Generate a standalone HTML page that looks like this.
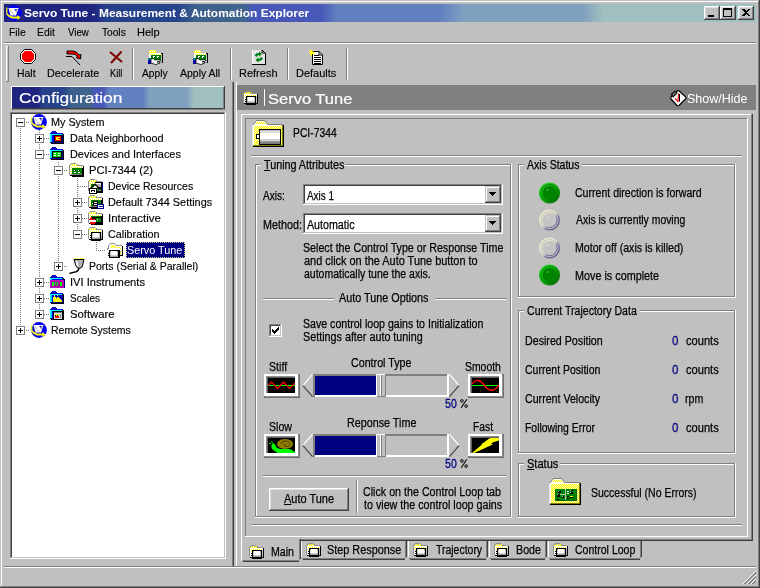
<!DOCTYPE html>
<html><head><meta charset="utf-8"><title>Servo Tune - Measurement &amp; Automation Explorer</title><style>
html,body{margin:0;padding:0}
body{width:760px;height:588px;overflow:hidden;background:#c0c0c0;position:relative;font-family:"Liberation Sans",sans-serif}
body>div,body>svg,body>span{position:absolute}
svg{display:block;overflow:visible}
.t{white-space:nowrap;transform-origin:0 0;display:block;filter:grayscale(1)}
.n{filter:none;will-change:transform}
</style></head>
<body>
<div style="left:1px;top:1px;width:757px;height:1px;background:#fff;"></div>
<div style="left:1px;top:1px;width:1px;height:585px;background:#fff;"></div>
<div style="left:758px;top:1px;width:1px;height:586px;background:#808080;"></div>
<div style="left:1px;top:586px;width:758px;height:1px;background:#808080;"></div>
<div style="left:759px;top:0px;width:1px;height:588px;background:#404040;"></div>
<div style="left:0px;top:587px;width:760px;height:1px;background:#404040;"></div>
<div style="left:4px;top:4px;width:752px;height:18px;background:linear-gradient(90deg,#1f2480 0,#1f2480 88px,#24408a 102px,#26448c 174px,#3e608c 192px,#40648c 240px,#4858b8 250px,#4858b8 318px,#6080c0 332px,#6080c0 436px,#80a0c0 460px,#80a0c0 578px,#a0c0c0 600px,#a0c0c0 752px);"></div>
<span class="t" id="title" style="left:24.00px;top:8.00px;font-size:11px;line-height:11px;color:#fff;font-weight:bold;transform:scaleX(1.0878);">Servo Tune - Measurement &amp; Automation Explorer</span>
<div style="left:704px;top:6px;width:16px;height:14px;background:#c0c0c0;"></div>
<div style="left:704px;top:6px;width:16px;height:1px;background:#fff;"></div>
<div style="left:704px;top:6px;width:1px;height:14px;background:#fff;"></div>
<div style="left:704px;top:19px;width:16px;height:1px;background:#404040;"></div>
<div style="left:719px;top:6px;width:1px;height:14px;background:#404040;"></div>
<div style="left:705px;top:7px;width:14px;height:1px;background:#dfdfdf;"></div>
<div style="left:705px;top:7px;width:1px;height:12px;background:#dfdfdf;"></div>
<div style="left:705px;top:18px;width:14px;height:1px;background:#808080;"></div>
<div style="left:718px;top:7px;width:1px;height:12px;background:#808080;"></div>
<div style="left:720px;top:6px;width:16px;height:14px;background:#c0c0c0;"></div>
<div style="left:720px;top:6px;width:16px;height:1px;background:#fff;"></div>
<div style="left:720px;top:6px;width:1px;height:14px;background:#fff;"></div>
<div style="left:720px;top:19px;width:16px;height:1px;background:#404040;"></div>
<div style="left:735px;top:6px;width:1px;height:14px;background:#404040;"></div>
<div style="left:721px;top:7px;width:14px;height:1px;background:#dfdfdf;"></div>
<div style="left:721px;top:7px;width:1px;height:12px;background:#dfdfdf;"></div>
<div style="left:721px;top:18px;width:14px;height:1px;background:#808080;"></div>
<div style="left:734px;top:7px;width:1px;height:12px;background:#808080;"></div>
<div style="left:738px;top:6px;width:16px;height:14px;background:#c0c0c0;"></div>
<div style="left:738px;top:6px;width:16px;height:1px;background:#fff;"></div>
<div style="left:738px;top:6px;width:1px;height:14px;background:#fff;"></div>
<div style="left:738px;top:19px;width:16px;height:1px;background:#404040;"></div>
<div style="left:753px;top:6px;width:1px;height:14px;background:#404040;"></div>
<div style="left:739px;top:7px;width:14px;height:1px;background:#dfdfdf;"></div>
<div style="left:739px;top:7px;width:1px;height:12px;background:#dfdfdf;"></div>
<div style="left:739px;top:18px;width:14px;height:1px;background:#808080;"></div>
<div style="left:752px;top:7px;width:1px;height:12px;background:#808080;"></div>
<div style="left:708px;top:15px;width:6px;height:2px;background:#000;"></div>
<div style="left:723px;top:8px;width:9px;height:9px;border:1px solid #000;border-top-width:2px;box-sizing:border-box;"></div>
<svg style="left:742px;top:9px" width="8" height="7" viewBox="0 0 8 7" shape-rendering="crispEdges"><path d="M0,0 L2,0 L4,2 L6,0 L8,0 L8,1 L5,3.5 L8,6 L8,7 L6,7 L4,5 L2,7 L0,7 L0,6 L3,3.5 L0,1Z" fill="#000" /></svg>
<span class="t" id="t1" style="left:9.06px;top:27.00px;font-size:11px;line-height:11px;color:#000;-webkit-text-stroke:0.15px #000;transform:scaleX(0.9375);">File</span>
<span class="t" id="t2" style="left:37.06px;top:27.00px;font-size:11px;line-height:11px;color:#000;-webkit-text-stroke:0.15px #000;transform:scaleX(0.9444);">Edit</span>
<span class="t" id="t3" style="left:68.00px;top:27.00px;font-size:11px;line-height:11px;color:#000;-webkit-text-stroke:0.15px #000;transform:scaleX(0.8750);">View</span>
<span class="t" id="t4" style="left:102.00px;top:27.00px;font-size:11px;line-height:11px;color:#000;-webkit-text-stroke:0.15px #000;transform:scaleX(0.9231);">Tools</span>
<span class="t" id="t5" style="left:137.00px;top:27.00px;font-size:11px;line-height:11px;color:#000;-webkit-text-stroke:0.15px #000;">Help</span>
<div style="left:4px;top:42px;width:752px;height:1px;background:#808080;"></div>
<div style="left:4px;top:43px;width:752px;height:1px;background:#fff;"></div>
<div style="left:6px;top:46px;width:1px;height:36px;background:#fff;"></div>
<div style="left:8px;top:46px;width:1px;height:36px;background:#808080;"></div>
<div style="left:6px;top:46px;width:2px;height:1px;background:#fff;"></div>
<div style="left:6px;top:81px;width:3px;height:1px;background:#808080;"></div>
<div style="left:132px;top:48px;width:1px;height:32px;background:#808080;"></div>
<div style="left:133px;top:48px;width:1px;height:32px;background:#fff;"></div>
<div style="left:230px;top:48px;width:1px;height:32px;background:#808080;"></div>
<div style="left:231px;top:48px;width:1px;height:32px;background:#fff;"></div>
<div style="left:287px;top:48px;width:1px;height:32px;background:#808080;"></div>
<div style="left:288px;top:48px;width:1px;height:32px;background:#fff;"></div>
<div style="left:346px;top:48px;width:1px;height:32px;background:#808080;"></div>
<div style="left:347px;top:48px;width:1px;height:32px;background:#fff;"></div>
<span class="t" id="t6" style="left:17.05px;top:68.00px;font-size:11px;line-height:11px;color:#000;-webkit-text-stroke:0.15px #000;transform:scaleX(0.9474);">Halt</span>
<span class="t" id="t7" style="left:47.02px;top:68.00px;font-size:11px;line-height:11px;color:#000;-webkit-text-stroke:0.15px #000;transform:scaleX(0.9808);">Decelerate</span>
<span class="t" id="t8" style="left:110.15px;top:68.00px;font-size:11px;line-height:11px;color:#000;-webkit-text-stroke:0.15px #000;transform:scaleX(0.8462);">Kill</span>
<span class="t" id="t9" style="left:142.00px;top:68.00px;font-size:11px;line-height:11px;color:#000;-webkit-text-stroke:0.15px #000;transform:scaleX(0.9286);">Apply</span>
<span class="t" id="t10" style="left:180.00px;top:68.00px;font-size:11px;line-height:11px;color:#000;-webkit-text-stroke:0.15px #000;transform:scaleX(0.9524);">Apply All</span>
<span class="t" id="t11" style="left:239.00px;top:68.00px;font-size:11px;line-height:11px;color:#000;-webkit-text-stroke:0.15px #000;">Refresh</span>
<span class="t" id="t12" style="left:296.00px;top:68.00px;font-size:11px;line-height:11px;color:#000;-webkit-text-stroke:0.15px #000;">Defaults</span>
<div style="left:11px;top:86px;width:214px;height:1px;background:#fff;"></div>
<div style="left:11px;top:86px;width:1px;height:24px;background:#fff;"></div>
<div style="left:11px;top:109px;width:214px;height:1px;background:#404040;"></div>
<div style="left:224px;top:86px;width:1px;height:24px;background:#404040;"></div>
<div style="left:12px;top:108px;width:213px;height:1px;background:#404040;"></div>
<div style="left:223px;top:87px;width:1px;height:22px;background:#808080;"></div>
<div style="left:11px;top:109px;width:214px;height:1px;background:#808080;"></div>
<div style="left:12px;top:87px;width:211px;height:21px;background:linear-gradient(90deg,#1f2480 0,#1f2480 26px,#24408a 30px,#26448c 52px,#3e608c 59px,#40648c 79px,#4858b8 82px,#4858b8 91px,#6080c0 97px,#6080c0 131px,#80a0c0 137px,#80a0c0 175px,#a0c0c0 182px,#a0c0c0 211px);"></div>
<span class="t" id="cfg" style="left:18.88px;top:90.00px;font-size:15.5px;line-height:15.5px;color:#fff;-webkit-text-stroke:0.2px #fff;transform:scaleX(1.1222);">Configuration</span>
<div style="left:10px;top:112px;width:216px;height:447px;background:#fff;"></div>
<div style="left:10px;top:112px;width:215px;height:1px;background:#808080;"></div>
<div style="left:10px;top:112px;width:1px;height:446px;background:#808080;"></div>
<div style="left:11px;top:113px;width:213px;height:1px;background:#404040;"></div>
<div style="left:11px;top:113px;width:1px;height:444px;background:#404040;"></div>
<div style="left:10px;top:558px;width:216px;height:1px;background:#fff;"></div>
<div style="left:225px;top:112px;width:1px;height:447px;background:#fff;"></div>
<div style="left:11px;top:557px;width:214px;height:1px;background:#c0c0c0;"></div>
<div style="left:224px;top:113px;width:1px;height:445px;background:#c0c0c0;"></div>
<div style="left:232px;top:82px;width:1px;height:484px;background:#808080;"></div>
<div style="left:233px;top:82px;width:1px;height:484px;background:#404040;"></div>
<div style="left:236px;top:82px;width:1px;height:484px;background:#fff;"></div>
<div style="left:237px;top:85px;width:519px;height:25px;background:#808080;"></div>
<div style="left:264px;top:89px;width:1px;height:17px;background:#fff;"></div>
<span class="t" id="hdr" style="left:267.94px;top:91.00px;font-size:15.5px;line-height:15.5px;color:#fff;-webkit-text-stroke:0.2px #fff;transform:scaleX(1.0641);">Servo Tune</span>
<span class="t" id="showhide" style="left:687.00px;top:93.00px;font-size:12.5px;line-height:12.5px;color:#fff;">Show/Hide</span>
<div style="left:241px;top:114px;width:510px;height:1px;background:#fff;"></div>
<div style="left:241px;top:114px;width:1px;height:447px;background:#fff;"></div>
<div style="left:751px;top:114px;width:1px;height:426px;background:#808080;"></div>
<div style="left:300px;top:539px;width:452px;height:1px;background:#808080;"></div>
<div style="left:752px;top:114px;width:1px;height:427px;background:#404040;"></div>
<div style="left:300px;top:540px;width:453px;height:1px;background:#404040;"></div>
<div style="left:245px;top:118px;width:502px;height:1px;background:#808080;"></div>
<div style="left:245px;top:118px;width:1px;height:418px;background:#808080;"></div>
<div style="left:245px;top:536px;width:503px;height:1px;background:#fff;"></div>
<div style="left:747px;top:118px;width:1px;height:419px;background:#fff;"></div>
<span class="t" id="t16" style="left:293.17px;top:127.00px;font-size:12.5px;line-height:12.5px;color:#000;-webkit-text-stroke:0.25px #000;transform:scaleX(0.8269);">PCI-7344</span>
<div style="left:251px;top:155px;width:491px;height:1px;background:#808080;"></div>
<div style="left:251px;top:156px;width:491px;height:1px;background:#fff;"></div>
<div style="left:251px;top:524px;width:491px;height:1px;background:#808080;"></div>
<div style="left:251px;top:525px;width:491px;height:1px;background:#fff;"></div>
<div style="left:255px;top:164px;width:6px;height:1px;background:#808080;"></div>
<div style="left:256px;top:165px;width:5px;height:1px;background:#fff;"></div>
<div style="left:345px;top:164px;width:166px;height:1px;background:#808080;"></div>
<div style="left:345px;top:165px;width:165px;height:1px;background:#fff;"></div>
<div style="left:255px;top:164px;width:1px;height:353px;background:#808080;"></div>
<div style="left:256px;top:165px;width:1px;height:351px;background:#fff;"></div>
<div style="left:255px;top:516px;width:256px;height:1px;background:#808080;"></div>
<div style="left:255px;top:517px;width:257px;height:1px;background:#fff;"></div>
<div style="left:510px;top:164px;width:1px;height:353px;background:#808080;"></div>
<div style="left:511px;top:164px;width:1px;height:354px;background:#fff;"></div>
<span class="t" id="t17" style="left:264.00px;top:159.00px;font-size:12.5px;line-height:12.5px;color:#000;-webkit-text-stroke:0.25px #000;transform:scaleX(0.8602);"><u>T</u>uning Attributes</span>
<span class="t" id="t18" style="left:263.00px;top:190.00px;font-size:12.5px;line-height:12.5px;color:#000;-webkit-text-stroke:0.25px #000;transform:scaleX(0.8077);">Axis:</span>
<span class="t" id="t19" style="left:263.14px;top:219.00px;font-size:12.5px;line-height:12.5px;color:#000;-webkit-text-stroke:0.25px #000;transform:scaleX(0.8605);">Method:</span>
<div style="left:303px;top:184px;width:200px;height:21px;background:#fff;"></div>
<div style="left:303px;top:184px;width:199px;height:1px;background:#808080;"></div>
<div style="left:303px;top:184px;width:1px;height:20px;background:#808080;"></div>
<div style="left:304px;top:185px;width:197px;height:1px;background:#404040;"></div>
<div style="left:304px;top:185px;width:1px;height:18px;background:#404040;"></div>
<div style="left:303px;top:204px;width:200px;height:1px;background:#fff;"></div>
<div style="left:502px;top:184px;width:1px;height:21px;background:#fff;"></div>
<div style="left:304px;top:203px;width:198px;height:1px;background:#c0c0c0;"></div>
<div style="left:501px;top:185px;width:1px;height:19px;background:#c0c0c0;"></div>
<div style="left:485px;top:186px;width:16px;height:17px;background:#c0c0c0;"></div>
<div style="left:485px;top:186px;width:16px;height:1px;background:#c0c0c0;"></div>
<div style="left:485px;top:186px;width:1px;height:17px;background:#c0c0c0;"></div>
<div style="left:485px;top:202px;width:16px;height:1px;background:#404040;"></div>
<div style="left:500px;top:186px;width:1px;height:17px;background:#404040;"></div>
<div style="left:486px;top:187px;width:14px;height:1px;background:#fff;"></div>
<div style="left:486px;top:187px;width:1px;height:15px;background:#fff;"></div>
<div style="left:486px;top:201px;width:14px;height:1px;background:#808080;"></div>
<div style="left:499px;top:187px;width:1px;height:15px;background:#808080;"></div>
<svg style="left:489px;top:192px" width="7" height="4" viewBox="0 0 7 4" shape-rendering="crispEdges"><path d="M0,0 H7 V1 H6 V2 H5 V3 H4 V4 H3 V3 H2 V2 H1 V1 H0Z" fill="#000" /></svg>
<span class="t" id="t20" style="left:307.00px;top:190.00px;font-size:12.5px;line-height:12.5px;color:#000;-webkit-text-stroke:0.25px #000;transform:scaleX(0.7941);">Axis 1</span>
<div style="left:303px;top:213px;width:200px;height:21px;background:#fff;"></div>
<div style="left:303px;top:213px;width:199px;height:1px;background:#808080;"></div>
<div style="left:303px;top:213px;width:1px;height:20px;background:#808080;"></div>
<div style="left:304px;top:214px;width:197px;height:1px;background:#404040;"></div>
<div style="left:304px;top:214px;width:1px;height:18px;background:#404040;"></div>
<div style="left:303px;top:233px;width:200px;height:1px;background:#fff;"></div>
<div style="left:502px;top:213px;width:1px;height:21px;background:#fff;"></div>
<div style="left:304px;top:232px;width:198px;height:1px;background:#c0c0c0;"></div>
<div style="left:501px;top:214px;width:1px;height:19px;background:#c0c0c0;"></div>
<div style="left:485px;top:215px;width:16px;height:17px;background:#c0c0c0;"></div>
<div style="left:485px;top:215px;width:16px;height:1px;background:#c0c0c0;"></div>
<div style="left:485px;top:215px;width:1px;height:17px;background:#c0c0c0;"></div>
<div style="left:485px;top:231px;width:16px;height:1px;background:#404040;"></div>
<div style="left:500px;top:215px;width:1px;height:17px;background:#404040;"></div>
<div style="left:486px;top:216px;width:14px;height:1px;background:#fff;"></div>
<div style="left:486px;top:216px;width:1px;height:15px;background:#fff;"></div>
<div style="left:486px;top:230px;width:14px;height:1px;background:#808080;"></div>
<div style="left:499px;top:216px;width:1px;height:15px;background:#808080;"></div>
<svg style="left:489px;top:221px" width="7" height="4" viewBox="0 0 7 4" shape-rendering="crispEdges"><path d="M0,0 H7 V1 H6 V2 H5 V3 H4 V4 H3 V3 H2 V2 H1 V1 H0Z" fill="#000" /></svg>
<span class="t" id="t21" style="left:307.00px;top:219.00px;font-size:12.5px;line-height:12.5px;color:#000;-webkit-text-stroke:0.25px #000;transform:scaleX(0.8545);">Automatic</span>
<span class="t" id="t22" style="left:303.15px;top:242.00px;font-size:12.5px;line-height:12.5px;color:#000;-webkit-text-stroke:0.25px #000;transform:scaleX(0.8541);">Select the Control Type or Response Time</span>
<span class="t" id="t23" style="left:304.00px;top:255.00px;font-size:12.5px;line-height:12.5px;color:#000;-webkit-text-stroke:0.25px #000;transform:scaleX(0.8737);">and click on the Auto Tune button to</span>
<span class="t" id="t24" style="left:304.00px;top:268.00px;font-size:12.5px;line-height:12.5px;color:#000;-webkit-text-stroke:0.25px #000;transform:scaleX(0.8400);">automatically tune the axis.</span>
<div style="left:263px;top:298px;width:71px;height:1px;background:#808080;"></div>
<div style="left:263px;top:299px;width:71px;height:1px;background:#fff;"></div>
<div style="left:435px;top:298px;width:71px;height:1px;background:#808080;"></div>
<div style="left:435px;top:299px;width:71px;height:1px;background:#fff;"></div>
<span class="t" id="t25" style="left:339.00px;top:292.00px;font-size:12.5px;line-height:12.5px;color:#000;-webkit-text-stroke:0.25px #000;transform:scaleX(0.8641);">Auto Tune Options</span>
<div style="left:269px;top:324px;width:13px;height:13px;background:#fff;"></div>
<div style="left:269px;top:324px;width:12px;height:1px;background:#808080;"></div>
<div style="left:269px;top:324px;width:1px;height:12px;background:#808080;"></div>
<div style="left:270px;top:325px;width:10px;height:1px;background:#404040;"></div>
<div style="left:270px;top:325px;width:1px;height:10px;background:#404040;"></div>
<div style="left:269px;top:336px;width:13px;height:1px;background:#fff;"></div>
<div style="left:281px;top:324px;width:1px;height:13px;background:#fff;"></div>
<div style="left:270px;top:335px;width:11px;height:1px;background:#c0c0c0;"></div>
<div style="left:280px;top:325px;width:1px;height:11px;background:#c0c0c0;"></div>
<svg style="left:272px;top:327px" width="7" height="7" viewBox="0 0 7 7" shape-rendering="crispEdges"><path d="M0,2 V5 L2,7 L7,2 V-1 L2,4 Z" fill="#000" /></svg>
<span class="t" id="t26" style="left:303.15px;top:318.00px;font-size:12.5px;line-height:12.5px;color:#000;-webkit-text-stroke:0.25px #000;transform:scaleX(0.8483);">Save control loop gains to Initialization</span>
<span class="t" id="t27" style="left:303.14px;top:331.00px;font-size:12.5px;line-height:12.5px;color:#000;-webkit-text-stroke:0.25px #000;transform:scaleX(0.8613);">Settings after auto tuning</span>
<span class="t" id="t28" style="left:269.15px;top:361.00px;font-size:12.5px;line-height:12.5px;color:#000;-webkit-text-stroke:0.25px #000;transform:scaleX(0.8500);">Stiff</span>
<span class="t" id="t29" style="left:351.14px;top:357.00px;font-size:12.5px;line-height:12.5px;color:#000;-webkit-text-stroke:0.25px #000;transform:scaleX(0.8551);">Control Type</span>
<span class="t" id="t30" style="left:465.17px;top:361.00px;font-size:12.5px;line-height:12.5px;color:#000;-webkit-text-stroke:0.25px #000;transform:scaleX(0.8333);">Smooth</span>
<div style="left:264px;top:374px;width:36px;height:24px;background:#c0c0c0;"></div>
<div style="left:264px;top:374px;width:34px;height:2px;background:#fff;"></div>
<div style="left:264px;top:374px;width:2px;height:22px;background:#fff;"></div>
<div style="left:298px;top:374px;width:2px;height:24px;background:#707070;"></div>
<div style="left:264px;top:396px;width:36px;height:2px;background:#707070;"></div>
<div style="left:265px;top:396px;width:34px;height:1px;background:#909090;"></div>
<div style="left:298px;top:375px;width:1px;height:22px;background:#909090;"></div>
<div style="left:266px;top:376px;width:29px;height:2px;background:#606060;"></div>
<div style="left:266px;top:376px;width:2px;height:17px;background:#606060;"></div>
<div style="left:266px;top:376px;width:29px;height:1px;background:#909090;"></div>
<div style="left:266px;top:376px;width:1px;height:18px;background:#909090;"></div>
<div style="left:295px;top:376px;width:3px;height:20px;background:#fff;"></div>
<div style="left:266px;top:393px;width:32px;height:3px;background:#fff;"></div>
<div style="left:268px;top:378px;width:27px;height:15px;background:#000;"></div>
<svg style="left:268px;top:378px;overflow:hidden" width="27" height="15" viewBox="0 0 27 15"><rect x="0" y="7" width="27" height="1" fill="#00ff00" shape-rendering="crispEdges"/><path d="M0,7.5 L3.5,4 L9.5,10.5 L15.5,4 L21.5,10.5 L27,5" fill="none" stroke="#ff0000" stroke-width="1.2"/></svg>
<div style="left:468px;top:374px;width:36px;height:24px;background:#c0c0c0;"></div>
<div style="left:468px;top:374px;width:34px;height:2px;background:#fff;"></div>
<div style="left:468px;top:374px;width:2px;height:22px;background:#fff;"></div>
<div style="left:502px;top:374px;width:2px;height:24px;background:#707070;"></div>
<div style="left:468px;top:396px;width:36px;height:2px;background:#707070;"></div>
<div style="left:469px;top:396px;width:34px;height:1px;background:#909090;"></div>
<div style="left:502px;top:375px;width:1px;height:22px;background:#909090;"></div>
<div style="left:470px;top:376px;width:29px;height:2px;background:#606060;"></div>
<div style="left:470px;top:376px;width:2px;height:17px;background:#606060;"></div>
<div style="left:470px;top:376px;width:29px;height:1px;background:#909090;"></div>
<div style="left:470px;top:376px;width:1px;height:18px;background:#909090;"></div>
<div style="left:499px;top:376px;width:3px;height:20px;background:#fff;"></div>
<div style="left:470px;top:393px;width:32px;height:3px;background:#fff;"></div>
<div style="left:472px;top:378px;width:27px;height:15px;background:#000;"></div>
<svg style="left:472px;top:378px;overflow:hidden" width="27" height="15" viewBox="0 0 27 15"><rect x="0" y="7" width="27" height="1" fill="#00ff00" shape-rendering="crispEdges"/><path d="M0,6 C3,1 8,1 12.5,7.5 S 22,14 27,7" fill="none" stroke="#ff0000" stroke-width="1.4"/></svg>
<div style="left:313px;top:374px;width:136px;height:23px;background:#c0c0c0;"></div>
<div style="left:313px;top:374px;width:134px;height:2px;background:#808080;"></div>
<div style="left:313px;top:374px;width:2px;height:23px;background:#808080;"></div>
<div style="left:315px;top:395px;width:134px;height:2px;background:#fff;"></div>
<div style="left:447px;top:374px;width:2px;height:23px;background:#fff;"></div>
<div style="left:315px;top:376px;width:61px;height:19px;background:#000080;"></div>
<div style="left:315px;top:374px;width:61px;height:1px;background:#808078;"></div>
<div style="left:315px;top:375px;width:61px;height:1px;background:#808078;"></div>
<div style="left:376px;top:374px;width:10px;height:23px;background:#c0c0c0;"></div>
<div style="left:376px;top:374px;width:1px;height:23px;background:#fff;"></div>
<div style="left:376px;top:374px;width:9px;height:1px;background:#fff;"></div>
<div style="left:380px;top:374px;width:1px;height:22px;background:#fff;"></div>
<div style="left:381px;top:375px;width:1px;height:22px;background:#808080;"></div>
<div style="left:385px;top:374px;width:1px;height:23px;background:#808080;"></div>
<div style="left:377px;top:396px;width:9px;height:1px;background:#808080;"></div>
<svg style="left:302px;top:374px" width="11" height="23" viewBox="0 0 11 23"><path d="M10.5,0.3 L1,11.3" stroke="#fff" stroke-width="1.2" fill="none"/><path d="M1,11.7 L10.5,22.7" stroke="#404040" stroke-width="1.1" fill="none"/></svg>
<svg style="left:449px;top:374px" width="11" height="23" viewBox="0 0 11 23"><path d="M0.5,0.3 L10,11.3" stroke="#fff" stroke-width="1.2" fill="none"/><path d="M10,11.7 L0.5,22.7" stroke="#404040" stroke-width="1.1" fill="none"/></svg>
<span class="t n" id="t31" style="left:445.15px;top:398.00px;font-size:12.5px;line-height:12.5px;color:#000080;-webkit-text-stroke:0.3px #000080;transform:scaleX(0.8462);">50</span>
<svg style="left:460px;top:399px" width="8" height="9" viewBox="0 0 8 9"><circle cx="1.9" cy="1.9" r="1.3" fill="none" stroke="#000" stroke-width="1"/><circle cx="6.1" cy="7.1" r="1.3" fill="none" stroke="#000" stroke-width="1"/><path d="M6.8,0.2 L1.2,8.8" stroke="#000" stroke-width="1.1" fill="none"/></svg>
<span class="t" id="t32" style="left:269.15px;top:421.00px;font-size:12.5px;line-height:12.5px;color:#000;-webkit-text-stroke:0.25px #000;transform:scaleX(0.8462);">Slow</span>
<span class="t" id="t33" style="left:347.14px;top:417.00px;font-size:12.5px;line-height:12.5px;color:#000;-webkit-text-stroke:0.25px #000;transform:scaleX(0.8608);">Reponse Time</span>
<span class="t" id="t34" style="left:473.17px;top:421.00px;font-size:12.5px;line-height:12.5px;color:#000;-webkit-text-stroke:0.25px #000;transform:scaleX(0.8261);">Fast</span>
<div style="left:264px;top:434px;width:36px;height:24px;background:#c0c0c0;"></div>
<div style="left:264px;top:434px;width:34px;height:2px;background:#fff;"></div>
<div style="left:264px;top:434px;width:2px;height:22px;background:#fff;"></div>
<div style="left:298px;top:434px;width:2px;height:24px;background:#707070;"></div>
<div style="left:264px;top:456px;width:36px;height:2px;background:#707070;"></div>
<div style="left:265px;top:456px;width:34px;height:1px;background:#909090;"></div>
<div style="left:298px;top:435px;width:1px;height:22px;background:#909090;"></div>
<div style="left:266px;top:436px;width:29px;height:2px;background:#606060;"></div>
<div style="left:266px;top:436px;width:2px;height:17px;background:#606060;"></div>
<div style="left:266px;top:436px;width:29px;height:1px;background:#909090;"></div>
<div style="left:266px;top:436px;width:1px;height:18px;background:#909090;"></div>
<div style="left:295px;top:436px;width:3px;height:20px;background:#fff;"></div>
<div style="left:266px;top:453px;width:32px;height:3px;background:#fff;"></div>
<div style="left:268px;top:438px;width:27px;height:15px;background:#000;"></div>
<svg style="left:268px;top:438px;overflow:hidden" width="27" height="15" viewBox="0 0 27 15"><ellipse cx="17" cy="6" rx="8" ry="5" fill="#908000"/><path d="M13,6 q0,-3 4,-3 q5,0 5,3 q0,2.5 -4,2.5 q-2,0 -2,-1.5 q0,-1 2,-1" fill="none" stroke="#504000" stroke-width="1"/><path d="M1,5.5 H3 M3,3.5 L5,5" stroke="#00ff00" stroke-width="1" fill="none"/><path d="M3.5,7 Q4,5 6,5.5 Q8,7 8.5,9.5 L12,11 L22,11 L27,14 V15 H9.5 L4,11 Q3,9 3.5,7Z" fill="#00ff00"/></svg>
<div style="left:468px;top:434px;width:36px;height:24px;background:#c0c0c0;"></div>
<div style="left:468px;top:434px;width:34px;height:2px;background:#fff;"></div>
<div style="left:468px;top:434px;width:2px;height:22px;background:#fff;"></div>
<div style="left:502px;top:434px;width:2px;height:24px;background:#707070;"></div>
<div style="left:468px;top:456px;width:36px;height:2px;background:#707070;"></div>
<div style="left:469px;top:456px;width:34px;height:1px;background:#909090;"></div>
<div style="left:502px;top:435px;width:1px;height:22px;background:#909090;"></div>
<div style="left:470px;top:436px;width:29px;height:2px;background:#606060;"></div>
<div style="left:470px;top:436px;width:2px;height:17px;background:#606060;"></div>
<div style="left:470px;top:436px;width:29px;height:1px;background:#909090;"></div>
<div style="left:470px;top:436px;width:1px;height:18px;background:#909090;"></div>
<div style="left:499px;top:436px;width:3px;height:20px;background:#fff;"></div>
<div style="left:470px;top:453px;width:32px;height:3px;background:#fff;"></div>
<div style="left:472px;top:438px;width:27px;height:15px;background:#000;"></div>
<svg style="left:472px;top:438px;overflow:hidden" width="27" height="15" viewBox="0 0 27 15"><path d="M0,15 L10,6.5 L9.5,5.8 L12,4.5 L16.5,1 L18.5,0 H27 V2.6 L21,4.3 L19,6 L21,6.3 L19,7.2 L12,10.5 L2,15 Z" fill="#ffff00"/></svg>
<div style="left:313px;top:434px;width:136px;height:23px;background:#c0c0c0;"></div>
<div style="left:313px;top:434px;width:134px;height:2px;background:#808080;"></div>
<div style="left:313px;top:434px;width:2px;height:23px;background:#808080;"></div>
<div style="left:315px;top:455px;width:134px;height:2px;background:#fff;"></div>
<div style="left:447px;top:434px;width:2px;height:23px;background:#fff;"></div>
<div style="left:315px;top:436px;width:61px;height:19px;background:#000080;"></div>
<div style="left:315px;top:434px;width:61px;height:1px;background:#808078;"></div>
<div style="left:315px;top:435px;width:61px;height:1px;background:#808078;"></div>
<div style="left:376px;top:434px;width:10px;height:23px;background:#c0c0c0;"></div>
<div style="left:376px;top:434px;width:1px;height:23px;background:#fff;"></div>
<div style="left:376px;top:434px;width:9px;height:1px;background:#fff;"></div>
<div style="left:380px;top:434px;width:1px;height:22px;background:#fff;"></div>
<div style="left:381px;top:435px;width:1px;height:22px;background:#808080;"></div>
<div style="left:385px;top:434px;width:1px;height:23px;background:#808080;"></div>
<div style="left:377px;top:456px;width:9px;height:1px;background:#808080;"></div>
<svg style="left:302px;top:434px" width="11" height="23" viewBox="0 0 11 23"><path d="M10.5,0.3 L1,11.3" stroke="#fff" stroke-width="1.2" fill="none"/><path d="M1,11.7 L10.5,22.7" stroke="#404040" stroke-width="1.1" fill="none"/></svg>
<svg style="left:449px;top:434px" width="11" height="23" viewBox="0 0 11 23"><path d="M0.5,0.3 L10,11.3" stroke="#fff" stroke-width="1.2" fill="none"/><path d="M10,11.7 L0.5,22.7" stroke="#404040" stroke-width="1.1" fill="none"/></svg>
<span class="t n" id="t35" style="left:445.15px;top:458.00px;font-size:12.5px;line-height:12.5px;color:#000080;-webkit-text-stroke:0.3px #000080;transform:scaleX(0.8462);">50</span>
<svg style="left:460px;top:459px" width="8" height="9" viewBox="0 0 8 9"><circle cx="1.9" cy="1.9" r="1.3" fill="none" stroke="#000" stroke-width="1"/><circle cx="6.1" cy="7.1" r="1.3" fill="none" stroke="#000" stroke-width="1"/><path d="M6.8,0.2 L1.2,8.8" stroke="#000" stroke-width="1.1" fill="none"/></svg>
<div style="left:263px;top:475px;width:243px;height:1px;background:#808080;"></div>
<div style="left:263px;top:476px;width:243px;height:1px;background:#fff;"></div>
<div style="left:269px;top:488px;width:80px;height:23px;background:#c0c0c0;"></div>
<div style="left:269px;top:488px;width:80px;height:1px;background:#fff;"></div>
<div style="left:269px;top:488px;width:1px;height:23px;background:#fff;"></div>
<div style="left:269px;top:510px;width:80px;height:1px;background:#404040;"></div>
<div style="left:348px;top:488px;width:1px;height:23px;background:#404040;"></div>
<div style="left:270px;top:489px;width:78px;height:1px;background:#dfdfdf;"></div>
<div style="left:270px;top:489px;width:1px;height:21px;background:#dfdfdf;"></div>
<div style="left:270px;top:509px;width:78px;height:1px;background:#808080;"></div>
<div style="left:347px;top:489px;width:1px;height:21px;background:#808080;"></div>
<span class="t" id="t36" style="left:284.00px;top:493.00px;font-size:12.5px;line-height:12.5px;color:#000;-webkit-text-stroke:0.25px #000;transform:scaleX(0.8772);"><u>A</u>uto Tune</span>
<div style="left:356px;top:480px;width:1px;height:33px;background:#808080;"></div>
<div style="left:357px;top:480px;width:1px;height:33px;background:#fff;"></div>
<span class="t" id="t37" style="left:363.14px;top:486.00px;font-size:12.5px;line-height:12.5px;color:#000;-webkit-text-stroke:0.25px #000;transform:scaleX(0.8562);">Click on the Control Loop tab</span>
<span class="t" id="t38" style="left:364.00px;top:499.00px;font-size:12.5px;line-height:12.5px;color:#000;-webkit-text-stroke:0.25px #000;transform:scaleX(0.8571);">to view the control loop gains</span>
<div style="left:518px;top:164px;width:6px;height:1px;background:#808080;"></div>
<div style="left:519px;top:165px;width:5px;height:1px;background:#fff;"></div>
<div style="left:582px;top:164px;width:153px;height:1px;background:#808080;"></div>
<div style="left:582px;top:165px;width:152px;height:1px;background:#fff;"></div>
<div style="left:518px;top:164px;width:1px;height:133px;background:#808080;"></div>
<div style="left:519px;top:165px;width:1px;height:131px;background:#fff;"></div>
<div style="left:518px;top:296px;width:217px;height:1px;background:#808080;"></div>
<div style="left:518px;top:297px;width:218px;height:1px;background:#fff;"></div>
<div style="left:734px;top:164px;width:1px;height:133px;background:#808080;"></div>
<div style="left:735px;top:164px;width:1px;height:134px;background:#fff;"></div>
<span class="t" id="t39" style="left:527.00px;top:159.00px;font-size:12.5px;line-height:12.5px;color:#000;-webkit-text-stroke:0.25px #000;transform:scaleX(0.8387);">Axis Status</span>
<span class="t" id="t40" style="left:575.16px;top:187.00px;font-size:12.5px;line-height:12.5px;color:#000;-webkit-text-stroke:0.25px #000;transform:scaleX(0.8446);">Current direction is forward</span>
<span class="t" id="t41" style="left:576.00px;top:214.00px;font-size:12.5px;line-height:12.5px;color:#000;-webkit-text-stroke:0.25px #000;transform:scaleX(0.8321);">Axis is currently moving</span>
<span class="t" id="t42" style="left:575.15px;top:242.00px;font-size:12.5px;line-height:12.5px;color:#000;-webkit-text-stroke:0.25px #000;transform:scaleX(0.8492);">Motor off (axis is killed)</span>
<span class="t" id="t43" style="left:575.14px;top:270.00px;font-size:12.5px;line-height:12.5px;color:#000;-webkit-text-stroke:0.25px #000;transform:scaleX(0.8646);">Move is complete</span>
<div style="left:518px;top:310px;width:6px;height:1px;background:#808080;"></div>
<div style="left:519px;top:311px;width:5px;height:1px;background:#fff;"></div>
<div style="left:640px;top:310px;width:95px;height:1px;background:#808080;"></div>
<div style="left:640px;top:311px;width:94px;height:1px;background:#fff;"></div>
<div style="left:518px;top:310px;width:1px;height:143px;background:#808080;"></div>
<div style="left:519px;top:311px;width:1px;height:141px;background:#fff;"></div>
<div style="left:518px;top:452px;width:217px;height:1px;background:#808080;"></div>
<div style="left:518px;top:453px;width:218px;height:1px;background:#fff;"></div>
<div style="left:734px;top:310px;width:1px;height:143px;background:#808080;"></div>
<div style="left:735px;top:310px;width:1px;height:144px;background:#fff;"></div>
<span class="t" id="t44" style="left:527.16px;top:305.00px;font-size:12.5px;line-height:12.5px;color:#000;-webkit-text-stroke:0.25px #000;transform:scaleX(0.8450);">Current Trajectory Data</span>
<span class="t" id="t45" style="left:525.15px;top:335.00px;font-size:12.5px;line-height:12.5px;color:#000;-webkit-text-stroke:0.25px #000;transform:scaleX(0.8539);">Desired Position</span>
<span class="t n" id="t46" style="left:672.00px;top:334.00px;font-size:13.5px;line-height:13.5px;color:#000080;-webkit-text-stroke:0.3px #000080;transform:scaleX(0.8571);">0</span>
<span class="t" id="t47" style="left:686.00px;top:335.00px;font-size:12.5px;line-height:12.5px;color:#000;-webkit-text-stroke:0.25px #000;transform:scaleX(0.8889);">counts</span>
<span class="t" id="t48" style="left:525.16px;top:364.00px;font-size:12.5px;line-height:12.5px;color:#000;-webkit-text-stroke:0.25px #000;transform:scaleX(0.8409);">Current Position</span>
<span class="t n" id="t49" style="left:672.00px;top:363.00px;font-size:13.5px;line-height:13.5px;color:#000080;-webkit-text-stroke:0.3px #000080;transform:scaleX(0.8571);">0</span>
<span class="t" id="t50" style="left:686.00px;top:364.00px;font-size:12.5px;line-height:12.5px;color:#000;-webkit-text-stroke:0.25px #000;transform:scaleX(0.8889);">counts</span>
<span class="t" id="t51" style="left:525.15px;top:393.00px;font-size:12.5px;line-height:12.5px;color:#000;-webkit-text-stroke:0.25px #000;transform:scaleX(0.8506);">Current Velocity</span>
<span class="t n" id="t52" style="left:672.00px;top:392.00px;font-size:13.5px;line-height:13.5px;color:#000080;-webkit-text-stroke:0.3px #000080;transform:scaleX(0.8571);">0</span>
<span class="t" id="t53" style="left:685.15px;top:393.00px;font-size:12.5px;line-height:12.5px;color:#000;-webkit-text-stroke:0.25px #000;transform:scaleX(0.8500);">rpm</span>
<span class="t" id="t54" style="left:525.17px;top:422.00px;font-size:12.5px;line-height:12.5px;color:#000;-webkit-text-stroke:0.25px #000;transform:scaleX(0.8313);">Following Error</span>
<span class="t n" id="t55" style="left:672.00px;top:421.00px;font-size:13.5px;line-height:13.5px;color:#000080;-webkit-text-stroke:0.3px #000080;transform:scaleX(0.8571);">0</span>
<span class="t" id="t56" style="left:686.00px;top:422.00px;font-size:12.5px;line-height:12.5px;color:#000;-webkit-text-stroke:0.25px #000;transform:scaleX(0.8889);">counts</span>
<div style="left:518px;top:463px;width:6px;height:1px;background:#808080;"></div>
<div style="left:519px;top:464px;width:5px;height:1px;background:#fff;"></div>
<div style="left:560px;top:463px;width:175px;height:1px;background:#808080;"></div>
<div style="left:560px;top:464px;width:174px;height:1px;background:#fff;"></div>
<div style="left:518px;top:463px;width:1px;height:54px;background:#808080;"></div>
<div style="left:519px;top:464px;width:1px;height:52px;background:#fff;"></div>
<div style="left:518px;top:516px;width:217px;height:1px;background:#808080;"></div>
<div style="left:518px;top:517px;width:218px;height:1px;background:#fff;"></div>
<div style="left:734px;top:463px;width:1px;height:54px;background:#808080;"></div>
<div style="left:735px;top:463px;width:1px;height:55px;background:#fff;"></div>
<span class="t" id="t57" style="left:527.12px;top:458.00px;font-size:12.5px;line-height:12.5px;color:#000;-webkit-text-stroke:0.25px #000;transform:scaleX(0.8824);"><u>S</u>tatus</span>
<span class="t" id="t58" style="left:591.16px;top:487.00px;font-size:12.5px;line-height:12.5px;color:#000;-webkit-text-stroke:0.25px #000;transform:scaleX(0.8387);">Successful (No Errors)</span>
<div style="left:242px;top:537px;width:58px;height:23px;background:#c0c0c0;"></div>
<div style="left:241px;top:537px;width:1px;height:23px;background:#fff;"></div>
<div style="left:242px;top:560px;width:57px;height:1px;background:#808080;"></div>
<div style="left:243px;top:561px;width:56px;height:1px;background:#404040;"></div>
<div style="left:299px;top:539px;width:1px;height:21px;background:#808080;"></div>
<div style="left:300px;top:539px;width:1px;height:20px;background:#404040;"></div>
<span class="t" id="t59" style="left:271.15px;top:546.00px;font-size:12.5px;line-height:12.5px;color:#000;-webkit-text-stroke:0.25px #000;transform:scaleX(0.8462);">Main</span>
<div style="left:301px;top:541px;width:1px;height:16px;background:#fff;"></div>
<div style="left:302px;top:558px;width:103px;height:1px;background:#808080;"></div>
<div style="left:303px;top:559px;width:102px;height:1px;background:#404040;"></div>
<div style="left:405px;top:541px;width:1px;height:17px;background:#808080;"></div>
<div style="left:406px;top:541px;width:1px;height:16px;background:#404040;"></div>
<span class="t" id="t60" style="left:327.13px;top:544.00px;font-size:12.5px;line-height:12.5px;color:#000;-webkit-text-stroke:0.25px #000;transform:scaleX(0.8690);">Step Response</span>
<div style="left:408px;top:541px;width:1px;height:16px;background:#fff;"></div>
<div style="left:409px;top:558px;width:77px;height:1px;background:#808080;"></div>
<div style="left:410px;top:559px;width:76px;height:1px;background:#404040;"></div>
<div style="left:486px;top:541px;width:1px;height:17px;background:#808080;"></div>
<div style="left:487px;top:541px;width:1px;height:16px;background:#404040;"></div>
<span class="t" id="t61" style="left:436.00px;top:544.00px;font-size:12.5px;line-height:12.5px;color:#000;-webkit-text-stroke:0.25px #000;transform:scaleX(0.8364);">Trajectory</span>
<div style="left:489px;top:541px;width:1px;height:16px;background:#fff;"></div>
<div style="left:490px;top:558px;width:55px;height:1px;background:#808080;"></div>
<div style="left:491px;top:559px;width:54px;height:1px;background:#404040;"></div>
<div style="left:545px;top:541px;width:1px;height:17px;background:#808080;"></div>
<div style="left:546px;top:541px;width:1px;height:16px;background:#404040;"></div>
<span class="t" id="t62" style="left:516.14px;top:544.00px;font-size:12.5px;line-height:12.5px;color:#000;-webkit-text-stroke:0.25px #000;transform:scaleX(0.8571);">Bode</span>
<div style="left:548px;top:541px;width:1px;height:16px;background:#fff;"></div>
<div style="left:549px;top:558px;width:91px;height:1px;background:#808080;"></div>
<div style="left:550px;top:559px;width:90px;height:1px;background:#404040;"></div>
<div style="left:640px;top:541px;width:1px;height:17px;background:#808080;"></div>
<div style="left:641px;top:541px;width:1px;height:16px;background:#404040;"></div>
<span class="t" id="t63" style="left:575.16px;top:544.00px;font-size:12.5px;line-height:12.5px;color:#000;-webkit-text-stroke:0.25px #000;transform:scaleX(0.8429);">Control Loop</span>
<div style="left:4px;top:566px;width:752px;height:1px;background:#808080;"></div>
<div style="left:4px;top:567px;width:752px;height:1px;background:#fff;"></div>
<svg style="left:743px;top:571px" width="13" height="13" viewBox="0 0 13 13" shape-rendering="crispEdges"><path d="M0.5,13 L13,0.5" fill="none" stroke="#fff" stroke-width="1" /><path d="M1.5,13 L13,1.5" fill="none" stroke="#808080" stroke-width="1.4" /><path d="M4.5,13 L13,4.5" fill="none" stroke="#fff" stroke-width="1" /><path d="M5.5,13 L13,5.5" fill="none" stroke="#808080" stroke-width="1.4" /><path d="M8.5,13 L13,8.5" fill="none" stroke="#fff" stroke-width="1" /><path d="M9.5,13 L13,9.5" fill="none" stroke="#808080" stroke-width="1.4" /></svg>
<div style="left:20px;top:128px;width:1px;height:198px;background:repeating-linear-gradient(180deg,#808080 0,#808080 1px,transparent 1px,transparent 2px);"></div>
<div style="left:39px;top:130px;width:1px;height:180px;background:repeating-linear-gradient(180deg,#808080 0,#808080 1px,transparent 1px,transparent 2px);"></div>
<div style="left:58px;top:162px;width:1px;height:100px;background:repeating-linear-gradient(180deg,#808080 0,#808080 1px,transparent 1px,transparent 2px);"></div>
<div style="left:77px;top:178px;width:1px;height:52px;background:repeating-linear-gradient(180deg,#808080 0,#808080 1px,transparent 1px,transparent 2px);"></div>
<div style="left:96px;top:242px;width:1px;height:9px;background:repeating-linear-gradient(180deg,#808080 0,#808080 1px,transparent 1px,transparent 2px);"></div>
<div style="left:26px;top:122px;width:4px;height:1px;background:repeating-linear-gradient(90deg,#808080 0,#808080 1px,transparent 1px,transparent 2px);"></div>
<div style="left:16px;top:118px;width:9px;height:9px;background:#fff;border:1px solid #808080;box-sizing:border-box;"></div>
<div style="left:18px;top:122px;width:5px;height:1px;background:#000;"></div>
<svg style="left:31px;top:114px" width="16" height="16" viewBox="0 0 16 16" shape-rendering="crispEdges"><g shape-rendering="auto"><circle cx="8" cy="8" r="7.9" fill="#0000f0"/><path d="M2.4,3 L12.6,3 L10,10.6 L4.5,10.6 Z" fill="#fff"/><path d="M8.2,4 L11.3,4 L9.7,6.3 Z" fill="#2020d0"/><path d="M11.3,4 L12.2,3.4 L10.3,8.5 L9.7,6.3 Z" fill="#b0b0c0"/><path d="M2.8,3.3 L8.2,10.4" stroke="#a0a0a8" stroke-width="0.7" fill="none"/><path d="M0.2,3 L1.4,2.2 L1.4,8.5 Q3,10 6.2,11.6 L11.4,11.6 L11.4,10 L14.6,12.5 L11.4,15 L11.4,13.4 L6,13.4 Q2,12 0.2,9.5 Z" fill="#ffff00"/></g></svg>
<span class="t" id="t64" style="left:51.02px;top:117.00px;font-size:11px;line-height:11px;color:#000;-webkit-text-stroke:0.15px #000;transform:scaleX(0.9811);">My System</span>
<div style="left:44px;top:138px;width:5px;height:1px;background:repeating-linear-gradient(90deg,#808080 0,#808080 1px,transparent 1px,transparent 2px);"></div>
<div style="left:35px;top:134px;width:9px;height:9px;background:#fff;border:1px solid #808080;box-sizing:border-box;"></div>
<div style="left:37px;top:138px;width:5px;height:1px;background:#000;"></div>
<div style="left:39px;top:136px;width:1px;height:5px;background:#000;"></div>
<svg style="left:49px;top:130px" width="16" height="16" viewBox="0 0 16 16" shape-rendering="crispEdges"><rect x="2" y="2" width="6" height="1" fill="#0000c0"/><rect x="3" y="1" width="4" height="1" fill="#0000c0"/><rect x="1" y="3" width="13" height="10" fill="#0000ff"/><rect x="1" y="3" width="7" height="1" fill="#0000c0"/><rect x="1" y="4" width="12" height="1" fill="#00ffff"/><rect x="1" y="4" width="1" height="8" fill="#00ffff"/><rect x="2" y="5" width="1" height="7" fill="#00c0ff"/><rect x="14" y="4" width="1" height="10" fill="#000"/><rect x="2" y="13" width="13" height="1" fill="#000"/><rect x="13" y="4" width="1" height="9" fill="#000080"/><rect x="1" y="12" width="13" height="1" fill="#000080"/><rect x="5" y="5" width="8" height="7" fill="#000"/><rect x="6" y="6" width="6" height="5" fill="#ff0000"/><rect x="7" y="7" width="4" height="3" fill="#ffff00"/><rect x="9" y="8" width="3" height="1" fill="#ff0000"/></svg>
<span class="t" id="t65" style="left:70.02px;top:133.00px;font-size:11px;line-height:11px;color:#000;-webkit-text-stroke:0.15px #000;transform:scaleX(0.9787);">Data Neighborhood</span>
<div style="left:44px;top:154px;width:5px;height:1px;background:repeating-linear-gradient(90deg,#808080 0,#808080 1px,transparent 1px,transparent 2px);"></div>
<div style="left:35px;top:150px;width:9px;height:9px;background:#fff;border:1px solid #808080;box-sizing:border-box;"></div>
<div style="left:37px;top:154px;width:5px;height:1px;background:#000;"></div>
<svg style="left:49px;top:146px" width="16" height="16" viewBox="0 0 16 16" shape-rendering="crispEdges"><rect x="2" y="2" width="6" height="1" fill="#0000c0"/><rect x="3" y="1" width="4" height="1" fill="#0000c0"/><rect x="1" y="3" width="13" height="10" fill="#0000ff"/><rect x="1" y="3" width="7" height="1" fill="#0000c0"/><rect x="1" y="4" width="12" height="1" fill="#00ffff"/><rect x="1" y="4" width="1" height="8" fill="#00ffff"/><rect x="2" y="5" width="1" height="7" fill="#00c0ff"/><rect x="14" y="4" width="1" height="10" fill="#000"/><rect x="2" y="13" width="13" height="1" fill="#000"/><rect x="13" y="4" width="1" height="9" fill="#000080"/><rect x="1" y="12" width="13" height="1" fill="#000080"/><rect x="3" y="5" width="10" height="7" fill="#000"/><rect x="4" y="6" width="8" height="5" fill="#00d000"/><rect x="5" y="7" width="2" height="1" fill="#fff"/><rect x="9" y="7" width="2" height="1" fill="#fff"/><rect x="5" y="9" width="2" height="1" fill="#fff"/><rect x="9" y="9" width="2" height="1" fill="#fff"/></svg>
<span class="t" id="t66" style="left:70.01px;top:149.00px;font-size:11px;line-height:11px;color:#000;-webkit-text-stroke:0.15px #000;transform:scaleX(0.9910);">Devices and Interfaces</span>
<div style="left:64px;top:170px;width:4px;height:1px;background:repeating-linear-gradient(90deg,#808080 0,#808080 1px,transparent 1px,transparent 2px);"></div>
<div style="left:54px;top:166px;width:9px;height:9px;background:#fff;border:1px solid #808080;box-sizing:border-box;"></div>
<div style="left:56px;top:170px;width:5px;height:1px;background:#000;"></div>
<svg style="left:69px;top:163px" width="15" height="14" viewBox="0 0 15 14" shape-rendering="crispEdges"><rect x="2" y="0" width="5" height="1" fill="#909090"/><rect x="1" y="1" width="1" height="1" fill="#909090"/><rect x="3" y="1" width="1" height="1" fill="#ffff00"/><rect x="5" y="1" width="1" height="1" fill="#ffff00"/><rect x="7" y="1" width="1" height="1" fill="#ffff00"/><rect x="8" y="1" width="1" height="1" fill="#909090"/><rect x="0" y="2" width="1" height="1" fill="#909090"/><rect x="1" y="2" width="1" height="1" fill="#ffff00"/><rect x="2" y="2" width="1" height="1" fill="#ffffa0"/><rect x="3" y="2" width="1" height="1" fill="#ffff00"/><rect x="4" y="2" width="1" height="1" fill="#ffffa0"/><rect x="5" y="2" width="1" height="1" fill="#ffff00"/><rect x="6" y="2" width="1" height="1" fill="#ffffa0"/><rect x="7" y="2" width="1" height="1" fill="#ffff00"/><rect x="8" y="2" width="6" height="1" fill="#909090"/><rect x="0" y="3" width="1" height="1" fill="#909090"/><rect x="1" y="3" width="13" height="1" fill="#ffffff"/><rect x="14" y="3" width="1" height="1" fill="#000000"/><rect x="0" y="4" width="1" height="1" fill="#909090"/><rect x="1" y="4" width="1" height="1" fill="#ffffff"/><rect x="2" y="4" width="1" height="1" fill="#ffff00"/><rect x="3" y="4" width="1" height="1" fill="#ffffff"/><rect x="4" y="4" width="1" height="1" fill="#ffff00"/><rect x="5" y="4" width="1" height="1" fill="#ffffff"/><rect x="6" y="4" width="1" height="1" fill="#ffff00"/><rect x="7" y="4" width="1" height="1" fill="#ffffff"/><rect x="8" y="4" width="1" height="1" fill="#ffff00"/><rect x="9" y="4" width="1" height="1" fill="#ffffff"/><rect x="10" y="4" width="1" height="1" fill="#ffff00"/><rect x="11" y="4" width="1" height="1" fill="#ffffff"/><rect x="12" y="4" width="1" height="1" fill="#ffff00"/><rect x="13" y="4" width="1" height="1" fill="#ffffff"/><rect x="14" y="4" width="1" height="1" fill="#000000"/><rect x="0" y="5" width="1" height="1" fill="#909090"/><rect x="1" y="5" width="2" height="1" fill="#ffffff"/><rect x="3" y="5" width="10" height="1" fill="#008000"/><rect x="13" y="5" width="2" height="1" fill="#000000"/><rect x="0" y="6" width="1" height="1" fill="#909090"/><rect x="1" y="6" width="1" height="1" fill="#ffffff"/><rect x="2" y="6" width="1" height="1" fill="#ffff00"/><rect x="3" y="6" width="10" height="1" fill="#008000"/><rect x="13" y="6" width="2" height="1" fill="#000000"/><rect x="0" y="7" width="1" height="1" fill="#909090"/><rect x="1" y="7" width="2" height="1" fill="#ffffff"/><rect x="3" y="7" width="10" height="1" fill="#008000"/><rect x="13" y="7" width="2" height="1" fill="#000000"/><rect x="0" y="8" width="1" height="1" fill="#909090"/><rect x="1" y="8" width="1" height="1" fill="#ffffff"/><rect x="2" y="8" width="1" height="1" fill="#ffff00"/><rect x="3" y="8" width="10" height="1" fill="#008000"/><rect x="13" y="8" width="2" height="1" fill="#000000"/><rect x="0" y="9" width="1" height="1" fill="#909090"/><rect x="1" y="9" width="2" height="1" fill="#ffffff"/><rect x="3" y="9" width="10" height="1" fill="#008000"/><rect x="13" y="9" width="2" height="1" fill="#000000"/><rect x="0" y="10" width="1" height="1" fill="#909090"/><rect x="1" y="10" width="1" height="1" fill="#ffffff"/><rect x="2" y="10" width="1" height="1" fill="#ffff00"/><rect x="3" y="10" width="10" height="1" fill="#008000"/><rect x="13" y="10" width="2" height="1" fill="#000000"/><rect x="0" y="11" width="1" height="1" fill="#909090"/><rect x="1" y="11" width="1" height="1" fill="#ffffff"/><rect x="2" y="11" width="11" height="1" fill="#808080"/><rect x="13" y="11" width="2" height="1" fill="#000000"/><rect x="1" y="12" width="14" height="1" fill="#000000"/><rect x="3" y="13" width="12" height="1" fill="#000000"/><g transform="translate(1,1)"><rect x="4" y="6" width="2" height="1" fill="#fff"/><rect x="8" y="6" width="2" height="1" fill="#fff"/><rect x="4" y="8" width="2" height="1" fill="#fff"/><rect x="8" y="8" width="2" height="1" fill="#fff"/><rect x="5" y="6" width="1" height="1" fill="#004000"/><rect x="9" y="6" width="1" height="1" fill="#004000"/></g></svg>
<span class="t" id="t67" style="left:88.98px;top:165.00px;font-size:11px;line-height:11px;color:#000;-webkit-text-stroke:0.15px #000;transform:scaleX(1.0164);">PCI-7344 (2)</span>
<div style="left:78px;top:186px;width:9px;height:1px;background:repeating-linear-gradient(90deg,#808080 0,#808080 1px,transparent 1px,transparent 2px);"></div>
<svg style="left:88px;top:179px" width="15" height="14" viewBox="0 0 15 14" shape-rendering="crispEdges"><rect x="2" y="0" width="5" height="1" fill="#909090"/><rect x="1" y="1" width="1" height="1" fill="#909090"/><rect x="3" y="1" width="1" height="1" fill="#ffff00"/><rect x="5" y="1" width="1" height="1" fill="#ffff00"/><rect x="7" y="1" width="1" height="1" fill="#ffff00"/><rect x="8" y="1" width="1" height="1" fill="#909090"/><rect x="0" y="2" width="1" height="1" fill="#909090"/><rect x="1" y="2" width="1" height="1" fill="#ffff00"/><rect x="2" y="2" width="1" height="1" fill="#ffffa0"/><rect x="3" y="2" width="1" height="1" fill="#ffff00"/><rect x="4" y="2" width="1" height="1" fill="#ffffa0"/><rect x="5" y="2" width="1" height="1" fill="#ffff00"/><rect x="6" y="2" width="1" height="1" fill="#ffffa0"/><rect x="7" y="2" width="1" height="1" fill="#ffff00"/><rect x="8" y="2" width="6" height="1" fill="#909090"/><rect x="0" y="3" width="1" height="1" fill="#909090"/><rect x="1" y="3" width="13" height="1" fill="#ffffff"/><rect x="14" y="3" width="1" height="1" fill="#000000"/><rect x="0" y="4" width="1" height="1" fill="#909090"/><rect x="1" y="4" width="1" height="1" fill="#ffffff"/><rect x="2" y="4" width="1" height="1" fill="#ffff00"/><rect x="3" y="4" width="1" height="1" fill="#ffffff"/><rect x="4" y="4" width="1" height="1" fill="#ffff00"/><rect x="5" y="4" width="1" height="1" fill="#ffffff"/><rect x="6" y="4" width="1" height="1" fill="#ffff00"/><rect x="7" y="4" width="1" height="1" fill="#ffffff"/><rect x="8" y="4" width="1" height="1" fill="#ffff00"/><rect x="9" y="4" width="1" height="1" fill="#ffffff"/><rect x="10" y="4" width="1" height="1" fill="#ffff00"/><rect x="11" y="4" width="1" height="1" fill="#ffffff"/><rect x="12" y="4" width="1" height="1" fill="#ffff00"/><rect x="13" y="4" width="1" height="1" fill="#ffffff"/><rect x="14" y="4" width="1" height="1" fill="#000000"/><rect x="0" y="5" width="1" height="1" fill="#909090"/><rect x="1" y="5" width="2" height="1" fill="#ffffff"/><rect x="3" y="5" width="10" height="1" fill="#008000"/><rect x="13" y="5" width="2" height="1" fill="#000000"/><rect x="0" y="6" width="1" height="1" fill="#909090"/><rect x="1" y="6" width="1" height="1" fill="#ffffff"/><rect x="2" y="6" width="1" height="1" fill="#ffff00"/><rect x="3" y="6" width="10" height="1" fill="#008000"/><rect x="13" y="6" width="2" height="1" fill="#000000"/><rect x="0" y="7" width="1" height="1" fill="#909090"/><rect x="1" y="7" width="2" height="1" fill="#ffffff"/><rect x="3" y="7" width="10" height="1" fill="#008000"/><rect x="13" y="7" width="2" height="1" fill="#000000"/><rect x="0" y="8" width="1" height="1" fill="#909090"/><rect x="1" y="8" width="1" height="1" fill="#ffffff"/><rect x="2" y="8" width="1" height="1" fill="#ffff00"/><rect x="3" y="8" width="10" height="1" fill="#008000"/><rect x="13" y="8" width="2" height="1" fill="#000000"/><rect x="0" y="9" width="1" height="1" fill="#909090"/><rect x="1" y="9" width="2" height="1" fill="#ffffff"/><rect x="3" y="9" width="10" height="1" fill="#008000"/><rect x="13" y="9" width="2" height="1" fill="#000000"/><rect x="0" y="10" width="1" height="1" fill="#909090"/><rect x="1" y="10" width="1" height="1" fill="#ffffff"/><rect x="2" y="10" width="1" height="1" fill="#ffff00"/><rect x="3" y="10" width="10" height="1" fill="#008000"/><rect x="13" y="10" width="2" height="1" fill="#000000"/><rect x="0" y="11" width="1" height="1" fill="#909090"/><rect x="1" y="11" width="1" height="1" fill="#ffffff"/><rect x="2" y="11" width="11" height="1" fill="#808080"/><rect x="13" y="11" width="2" height="1" fill="#000000"/><rect x="1" y="12" width="14" height="1" fill="#000000"/><rect x="3" y="13" width="12" height="1" fill="#000000"/><g transform="translate(1,1)"><rect x="6" y="2" width="7" height="1" fill="#000"/><rect x="6" y="3" width="7" height="1" fill="#fff"/><rect x="7" y="4" width="6" height="3" fill="#b8b8b8"/><rect x="6" y="7" width="7" height="2" fill="#000"/><rect x="13" y="3" width="1" height="7" fill="#000090"/><rect x="12" y="3" width="1" height="6" fill="#000"/><g shape-rendering="auto"><path d="M1.5,8.5 L6,4 L11,9" fill="none" stroke="#000" stroke-width="1.1" /><path d="M3,8.5 L6,5.5 L9,8.5 Z" fill="#fff" /></g><rect x="0" y="8" width="8" height="6" fill="#000"/><rect x="1" y="9" width="6" height="4" fill="#fff"/><rect x="2" y="10" width="4" height="1" fill="#000"/><rect x="2" y="12" width="4" height="1" fill="#fff"/><rect x="2" y="11" width="4" height="1" fill="#000"/><rect x="3" y="11" width="2" height="1" fill="#fff"/></g></svg>
<span class="t" id="t68" style="left:108.05px;top:181.00px;font-size:11px;line-height:11px;color:#000;-webkit-text-stroke:0.15px #000;transform:scaleX(0.9545);">Device Resources</span>
<div style="left:82px;top:202px;width:5px;height:1px;background:repeating-linear-gradient(90deg,#808080 0,#808080 1px,transparent 1px,transparent 2px);"></div>
<div style="left:73px;top:198px;width:9px;height:9px;background:#fff;border:1px solid #808080;box-sizing:border-box;"></div>
<div style="left:75px;top:202px;width:5px;height:1px;background:#000;"></div>
<div style="left:77px;top:200px;width:1px;height:5px;background:#000;"></div>
<svg style="left:88px;top:195px" width="15" height="14" viewBox="0 0 15 14" shape-rendering="crispEdges"><rect x="2" y="0" width="5" height="1" fill="#909090"/><rect x="1" y="1" width="1" height="1" fill="#909090"/><rect x="3" y="1" width="1" height="1" fill="#ffff00"/><rect x="5" y="1" width="1" height="1" fill="#ffff00"/><rect x="7" y="1" width="1" height="1" fill="#ffff00"/><rect x="8" y="1" width="1" height="1" fill="#909090"/><rect x="0" y="2" width="1" height="1" fill="#909090"/><rect x="1" y="2" width="1" height="1" fill="#ffff00"/><rect x="2" y="2" width="1" height="1" fill="#ffffa0"/><rect x="3" y="2" width="1" height="1" fill="#ffff00"/><rect x="4" y="2" width="1" height="1" fill="#ffffa0"/><rect x="5" y="2" width="1" height="1" fill="#ffff00"/><rect x="6" y="2" width="1" height="1" fill="#ffffa0"/><rect x="7" y="2" width="1" height="1" fill="#ffff00"/><rect x="8" y="2" width="6" height="1" fill="#909090"/><rect x="0" y="3" width="1" height="1" fill="#909090"/><rect x="1" y="3" width="13" height="1" fill="#ffffff"/><rect x="14" y="3" width="1" height="1" fill="#000000"/><rect x="0" y="4" width="1" height="1" fill="#909090"/><rect x="1" y="4" width="1" height="1" fill="#ffffff"/><rect x="2" y="4" width="1" height="1" fill="#ffff00"/><rect x="3" y="4" width="1" height="1" fill="#ffffff"/><rect x="4" y="4" width="1" height="1" fill="#ffff00"/><rect x="5" y="4" width="1" height="1" fill="#ffffff"/><rect x="6" y="4" width="1" height="1" fill="#ffff00"/><rect x="7" y="4" width="1" height="1" fill="#ffffff"/><rect x="8" y="4" width="1" height="1" fill="#ffff00"/><rect x="9" y="4" width="1" height="1" fill="#ffffff"/><rect x="10" y="4" width="1" height="1" fill="#ffff00"/><rect x="11" y="4" width="1" height="1" fill="#ffffff"/><rect x="12" y="4" width="1" height="1" fill="#ffff00"/><rect x="13" y="4" width="1" height="1" fill="#ffffff"/><rect x="14" y="4" width="1" height="1" fill="#000000"/><rect x="0" y="5" width="1" height="1" fill="#909090"/><rect x="1" y="5" width="2" height="1" fill="#ffffff"/><rect x="3" y="5" width="10" height="1" fill="#008000"/><rect x="13" y="5" width="2" height="1" fill="#000000"/><rect x="0" y="6" width="1" height="1" fill="#909090"/><rect x="1" y="6" width="1" height="1" fill="#ffffff"/><rect x="2" y="6" width="1" height="1" fill="#ffff00"/><rect x="3" y="6" width="10" height="1" fill="#008000"/><rect x="13" y="6" width="2" height="1" fill="#000000"/><rect x="0" y="7" width="1" height="1" fill="#909090"/><rect x="1" y="7" width="2" height="1" fill="#ffffff"/><rect x="3" y="7" width="10" height="1" fill="#008000"/><rect x="13" y="7" width="2" height="1" fill="#000000"/><rect x="0" y="8" width="1" height="1" fill="#909090"/><rect x="1" y="8" width="1" height="1" fill="#ffffff"/><rect x="2" y="8" width="1" height="1" fill="#ffff00"/><rect x="3" y="8" width="10" height="1" fill="#008000"/><rect x="13" y="8" width="2" height="1" fill="#000000"/><rect x="0" y="9" width="1" height="1" fill="#909090"/><rect x="1" y="9" width="2" height="1" fill="#ffffff"/><rect x="3" y="9" width="10" height="1" fill="#008000"/><rect x="13" y="9" width="2" height="1" fill="#000000"/><rect x="0" y="10" width="1" height="1" fill="#909090"/><rect x="1" y="10" width="1" height="1" fill="#ffffff"/><rect x="2" y="10" width="1" height="1" fill="#ffff00"/><rect x="3" y="10" width="10" height="1" fill="#008000"/><rect x="13" y="10" width="2" height="1" fill="#000000"/><rect x="0" y="11" width="1" height="1" fill="#909090"/><rect x="1" y="11" width="1" height="1" fill="#ffffff"/><rect x="2" y="11" width="11" height="1" fill="#808080"/><rect x="13" y="11" width="2" height="1" fill="#000000"/><rect x="1" y="12" width="14" height="1" fill="#000000"/><rect x="3" y="13" width="12" height="1" fill="#000000"/><g transform="translate(1,1)"><rect x="4" y="5" width="5" height="5" fill="#000"/><rect x="5" y="6" width="3" height="1" fill="#fff"/><rect x="5" y="8" width="3" height="1" fill="#fff"/><rect x="3" y="7" width="1" height="1" fill="#fff"/><rect x="8" y="8" width="7" height="5" fill="#000090"/><rect x="9" y="9" width="5" height="3" fill="#fff"/><rect x="10" y="10" width="3" height="1" fill="#000090"/><rect x="13" y="10" width="1" height="1" fill="#000090"/></g></svg>
<span class="t" id="t69" style="left:108.01px;top:197.00px;font-size:11px;line-height:11px;color:#000;-webkit-text-stroke:0.15px #000;transform:scaleX(0.9904);">Default 7344 Settings</span>
<div style="left:82px;top:218px;width:5px;height:1px;background:repeating-linear-gradient(90deg,#808080 0,#808080 1px,transparent 1px,transparent 2px);"></div>
<div style="left:73px;top:214px;width:9px;height:9px;background:#fff;border:1px solid #808080;box-sizing:border-box;"></div>
<div style="left:75px;top:218px;width:5px;height:1px;background:#000;"></div>
<div style="left:77px;top:216px;width:1px;height:5px;background:#000;"></div>
<svg style="left:88px;top:211px" width="15" height="14" viewBox="0 0 15 14" shape-rendering="crispEdges"><rect x="2" y="0" width="5" height="1" fill="#909090"/><rect x="1" y="1" width="1" height="1" fill="#909090"/><rect x="3" y="1" width="1" height="1" fill="#ffff00"/><rect x="5" y="1" width="1" height="1" fill="#ffff00"/><rect x="7" y="1" width="1" height="1" fill="#ffff00"/><rect x="8" y="1" width="1" height="1" fill="#909090"/><rect x="0" y="2" width="1" height="1" fill="#909090"/><rect x="1" y="2" width="1" height="1" fill="#ffff00"/><rect x="2" y="2" width="1" height="1" fill="#ffffa0"/><rect x="3" y="2" width="1" height="1" fill="#ffff00"/><rect x="4" y="2" width="1" height="1" fill="#ffffa0"/><rect x="5" y="2" width="1" height="1" fill="#ffff00"/><rect x="6" y="2" width="1" height="1" fill="#ffffa0"/><rect x="7" y="2" width="1" height="1" fill="#ffff00"/><rect x="8" y="2" width="6" height="1" fill="#909090"/><rect x="0" y="3" width="1" height="1" fill="#909090"/><rect x="1" y="3" width="13" height="1" fill="#ffffff"/><rect x="14" y="3" width="1" height="1" fill="#000000"/><rect x="0" y="4" width="1" height="1" fill="#909090"/><rect x="1" y="4" width="1" height="1" fill="#ffffff"/><rect x="2" y="4" width="1" height="1" fill="#ffff00"/><rect x="3" y="4" width="1" height="1" fill="#ffffff"/><rect x="4" y="4" width="1" height="1" fill="#ffff00"/><rect x="5" y="4" width="1" height="1" fill="#ffffff"/><rect x="6" y="4" width="1" height="1" fill="#ffff00"/><rect x="7" y="4" width="1" height="1" fill="#ffffff"/><rect x="8" y="4" width="1" height="1" fill="#ffff00"/><rect x="9" y="4" width="1" height="1" fill="#ffffff"/><rect x="10" y="4" width="1" height="1" fill="#ffff00"/><rect x="11" y="4" width="1" height="1" fill="#ffffff"/><rect x="12" y="4" width="1" height="1" fill="#ffff00"/><rect x="13" y="4" width="1" height="1" fill="#ffffff"/><rect x="14" y="4" width="1" height="1" fill="#000000"/><rect x="0" y="5" width="1" height="1" fill="#909090"/><rect x="1" y="5" width="2" height="1" fill="#ffffff"/><rect x="3" y="5" width="10" height="1" fill="#008000"/><rect x="13" y="5" width="2" height="1" fill="#000000"/><rect x="0" y="6" width="1" height="1" fill="#909090"/><rect x="1" y="6" width="1" height="1" fill="#ffffff"/><rect x="2" y="6" width="1" height="1" fill="#ffff00"/><rect x="3" y="6" width="10" height="1" fill="#008000"/><rect x="13" y="6" width="2" height="1" fill="#000000"/><rect x="0" y="7" width="1" height="1" fill="#909090"/><rect x="1" y="7" width="2" height="1" fill="#ffffff"/><rect x="3" y="7" width="10" height="1" fill="#008000"/><rect x="13" y="7" width="2" height="1" fill="#000000"/><rect x="0" y="8" width="1" height="1" fill="#909090"/><rect x="1" y="8" width="1" height="1" fill="#ffffff"/><rect x="2" y="8" width="1" height="1" fill="#ffff00"/><rect x="3" y="8" width="10" height="1" fill="#008000"/><rect x="13" y="8" width="2" height="1" fill="#000000"/><rect x="0" y="9" width="1" height="1" fill="#909090"/><rect x="1" y="9" width="2" height="1" fill="#ffffff"/><rect x="3" y="9" width="10" height="1" fill="#008000"/><rect x="13" y="9" width="2" height="1" fill="#000000"/><rect x="0" y="10" width="1" height="1" fill="#909090"/><rect x="1" y="10" width="1" height="1" fill="#ffffff"/><rect x="2" y="10" width="1" height="1" fill="#ffff00"/><rect x="3" y="10" width="10" height="1" fill="#008000"/><rect x="13" y="10" width="2" height="1" fill="#000000"/><rect x="0" y="11" width="1" height="1" fill="#909090"/><rect x="1" y="11" width="1" height="1" fill="#ffffff"/><rect x="2" y="11" width="11" height="1" fill="#808080"/><rect x="13" y="11" width="2" height="1" fill="#000000"/><rect x="1" y="12" width="14" height="1" fill="#000000"/><rect x="3" y="13" width="12" height="1" fill="#000000"/><g transform="translate(1,1)"><rect x="2" y="5" width="10" height="6" fill="#000"/><rect x="7" y="6" width="5" height="4" fill="#008000"/><rect x="8" y="7" width="1" height="1" fill="#fff"/><rect x="1" y="8" width="6" height="2" fill="#fff"/><path d="M0,7.5 L3,4.5 V6.5 H6 V8 H0Z" fill="#ff0000" /><path d="M7,10.5 L4,13.5 V11.5 H1 V10 H7Z" fill="#ff0000" /></g></svg>
<span class="t" id="t70" style="left:107.96px;top:213.00px;font-size:11px;line-height:11px;color:#000;-webkit-text-stroke:0.15px #000;transform:scaleX(1.0400);">Interactive</span>
<div style="left:82px;top:234px;width:5px;height:1px;background:repeating-linear-gradient(90deg,#808080 0,#808080 1px,transparent 1px,transparent 2px);"></div>
<div style="left:73px;top:230px;width:9px;height:9px;background:#fff;border:1px solid #808080;box-sizing:border-box;"></div>
<div style="left:75px;top:234px;width:5px;height:1px;background:#000;"></div>
<svg style="left:88px;top:227px" width="15" height="14" viewBox="0 0 15 14" shape-rendering="crispEdges"><rect x="2" y="0" width="5" height="1" fill="#909090"/><rect x="1" y="1" width="1" height="1" fill="#909090"/><rect x="3" y="1" width="1" height="1" fill="#ffff00"/><rect x="5" y="1" width="1" height="1" fill="#ffff00"/><rect x="7" y="1" width="1" height="1" fill="#ffff00"/><rect x="8" y="1" width="1" height="1" fill="#909090"/><rect x="0" y="2" width="1" height="1" fill="#909090"/><rect x="1" y="2" width="1" height="1" fill="#ffff00"/><rect x="2" y="2" width="1" height="1" fill="#ffffa0"/><rect x="3" y="2" width="1" height="1" fill="#ffff00"/><rect x="4" y="2" width="1" height="1" fill="#ffffa0"/><rect x="5" y="2" width="1" height="1" fill="#ffff00"/><rect x="6" y="2" width="1" height="1" fill="#ffffa0"/><rect x="7" y="2" width="1" height="1" fill="#ffff00"/><rect x="8" y="2" width="6" height="1" fill="#909090"/><rect x="0" y="3" width="1" height="1" fill="#909090"/><rect x="1" y="3" width="13" height="1" fill="#ffffff"/><rect x="14" y="3" width="1" height="1" fill="#000000"/><rect x="0" y="4" width="1" height="1" fill="#909090"/><rect x="1" y="4" width="1" height="1" fill="#ffffff"/><rect x="2" y="4" width="1" height="1" fill="#ffff00"/><rect x="3" y="4" width="1" height="1" fill="#ffffff"/><rect x="4" y="4" width="1" height="1" fill="#ffff00"/><rect x="5" y="4" width="1" height="1" fill="#ffffff"/><rect x="6" y="4" width="1" height="1" fill="#ffff00"/><rect x="7" y="4" width="1" height="1" fill="#ffffff"/><rect x="8" y="4" width="1" height="1" fill="#ffff00"/><rect x="9" y="4" width="1" height="1" fill="#ffffff"/><rect x="10" y="4" width="1" height="1" fill="#ffff00"/><rect x="11" y="4" width="1" height="1" fill="#ffffff"/><rect x="12" y="4" width="1" height="1" fill="#ffff00"/><rect x="13" y="4" width="1" height="1" fill="#ffffff"/><rect x="14" y="4" width="1" height="1" fill="#000000"/><rect x="0" y="5" width="1" height="1" fill="#909090"/><rect x="1" y="5" width="2" height="1" fill="#ffffff"/><rect x="3" y="5" width="10" height="1" fill="#000000"/><rect x="13" y="5" width="1" height="1" fill="#c0c0c0"/><rect x="14" y="5" width="1" height="1" fill="#000000"/><rect x="0" y="6" width="1" height="1" fill="#909090"/><rect x="1" y="6" width="1" height="1" fill="#ffffff"/><rect x="2" y="6" width="1" height="1" fill="#ffff00"/><rect x="3" y="6" width="1" height="1" fill="#000000"/><rect x="4" y="6" width="1" height="1" fill="#a0a0a0"/><rect x="5" y="6" width="6" height="1" fill="#ffffff"/><rect x="11" y="6" width="1" height="1" fill="#a0a0a0"/><rect x="12" y="6" width="1" height="1" fill="#000000"/><rect x="13" y="6" width="1" height="1" fill="#c0c0c0"/><rect x="14" y="6" width="1" height="1" fill="#000000"/><rect x="0" y="7" width="1" height="1" fill="#909090"/><rect x="1" y="7" width="2" height="1" fill="#ffffff"/><rect x="3" y="7" width="1" height="1" fill="#000000"/><rect x="4" y="7" width="1" height="1" fill="#c8c8c8"/><rect x="5" y="7" width="6" height="1" fill="#ffffff"/><rect x="11" y="7" width="1" height="1" fill="#c8c8c8"/><rect x="12" y="7" width="1" height="1" fill="#000000"/><rect x="13" y="7" width="1" height="1" fill="#c0c0c0"/><rect x="14" y="7" width="1" height="1" fill="#000000"/><rect x="0" y="8" width="1" height="1" fill="#909090"/><rect x="1" y="8" width="1" height="1" fill="#ffffff"/><rect x="2" y="8" width="2" height="1" fill="#000000"/><rect x="4" y="8" width="1" height="1" fill="#c8c8c8"/><rect x="5" y="8" width="6" height="1" fill="#ffffff"/><rect x="11" y="8" width="1" height="1" fill="#c8c8c8"/><rect x="12" y="8" width="1" height="1" fill="#000000"/><rect x="13" y="8" width="1" height="1" fill="#c0c0c0"/><rect x="14" y="8" width="1" height="1" fill="#000000"/><rect x="0" y="9" width="1" height="1" fill="#909090"/><rect x="1" y="9" width="2" height="1" fill="#ffffff"/><rect x="3" y="9" width="1" height="1" fill="#000000"/><rect x="4" y="9" width="1" height="1" fill="#c8c8c8"/><rect x="5" y="9" width="6" height="1" fill="#ffffff"/><rect x="11" y="9" width="1" height="1" fill="#c8c8c8"/><rect x="12" y="9" width="1" height="1" fill="#000000"/><rect x="13" y="9" width="1" height="1" fill="#c0c0c0"/><rect x="14" y="9" width="1" height="1" fill="#000000"/><rect x="0" y="10" width="1" height="1" fill="#909090"/><rect x="1" y="10" width="1" height="1" fill="#ffffff"/><rect x="2" y="10" width="2" height="1" fill="#000000"/><rect x="4" y="10" width="1" height="1" fill="#a0a0a0"/><rect x="5" y="10" width="6" height="1" fill="#d0d0d0"/><rect x="11" y="10" width="1" height="1" fill="#a0a0a0"/><rect x="12" y="10" width="1" height="1" fill="#000000"/><rect x="13" y="10" width="1" height="1" fill="#c0c0c0"/><rect x="14" y="10" width="1" height="1" fill="#000000"/><rect x="0" y="11" width="1" height="1" fill="#909090"/><rect x="1" y="11" width="2" height="1" fill="#ffffff"/><rect x="3" y="11" width="1" height="1" fill="#000000"/><rect x="4" y="11" width="8" height="1" fill="#a0a0a0"/><rect x="12" y="11" width="1" height="1" fill="#000000"/><rect x="13" y="11" width="1" height="1" fill="#c0c0c0"/><rect x="14" y="11" width="1" height="1" fill="#000000"/><rect x="1" y="12" width="14" height="1" fill="#000000"/><rect x="3" y="13" width="10" height="1" fill="#000000"/></svg>
<span class="t" id="t71" style="left:108.02px;top:229.00px;font-size:11px;line-height:11px;color:#000;-webkit-text-stroke:0.15px #000;transform:scaleX(0.9804);">Calibration</span>
<div style="left:98px;top:250px;width:8px;height:1px;background:repeating-linear-gradient(90deg,#808080 0,#808080 1px,transparent 1px,transparent 2px);"></div>
<svg style="left:107px;top:243px" width="16" height="15" viewBox="0 0 16 15" shape-rendering="crispEdges"><rect x="3" y="0" width="5" height="1" fill="#909090"/><rect x="2" y="1" width="1" height="1" fill="#909090"/><rect x="3" y="1" width="5" height="1" fill="#ffffff"/><rect x="8" y="1" width="1" height="1" fill="#909090"/><rect x="1" y="2" width="1" height="1" fill="#909090"/><rect x="2" y="2" width="2" height="1" fill="#ffffff"/><rect x="4" y="2" width="1" height="1" fill="#ffff00"/><rect x="5" y="2" width="1" height="1" fill="#ffffa0"/><rect x="6" y="2" width="1" height="1" fill="#ffff00"/><rect x="7" y="2" width="1" height="1" fill="#ffffa0"/><rect x="8" y="2" width="1" height="1" fill="#ffffff"/><rect x="9" y="2" width="6" height="1" fill="#909090"/><rect x="1" y="3" width="1" height="1" fill="#909090"/><rect x="2" y="3" width="2" height="1" fill="#ffffff"/><rect x="4" y="3" width="1" height="1" fill="#ffffa0"/><rect x="5" y="3" width="1" height="1" fill="#ffff00"/><rect x="6" y="3" width="1" height="1" fill="#ffffa0"/><rect x="7" y="3" width="1" height="1" fill="#ffff00"/><rect x="8" y="3" width="1" height="1" fill="#ffffa0"/><rect x="9" y="3" width="6" height="1" fill="#ffffff"/><rect x="15" y="3" width="1" height="1" fill="#000000"/><rect x="1" y="4" width="1" height="1" fill="#909090"/><rect x="2" y="4" width="2" height="1" fill="#ffffff"/><rect x="4" y="4" width="1" height="1" fill="#ffff00"/><rect x="5" y="4" width="1" height="1" fill="#ffffa0"/><rect x="6" y="4" width="1" height="1" fill="#ffff00"/><rect x="7" y="4" width="1" height="1" fill="#ffffa0"/><rect x="8" y="4" width="1" height="1" fill="#ffff00"/><rect x="9" y="4" width="1" height="1" fill="#ffffa0"/><rect x="10" y="4" width="1" height="1" fill="#ffff00"/><rect x="11" y="4" width="1" height="1" fill="#ffffa0"/><rect x="12" y="4" width="1" height="1" fill="#ffff00"/><rect x="13" y="4" width="1" height="1" fill="#ffffa0"/><rect x="14" y="4" width="1" height="1" fill="#ffffff"/><rect x="15" y="4" width="1" height="1" fill="#000000"/><rect x="0" y="5" width="2" height="1" fill="#909090"/><rect x="2" y="5" width="11" height="1" fill="#ffffff"/><rect x="13" y="5" width="1" height="1" fill="#ffff00"/><rect x="14" y="5" width="1" height="1" fill="#ffffff"/><rect x="15" y="5" width="1" height="1" fill="#000000"/><rect x="0" y="6" width="1" height="1" fill="#909090"/><rect x="1" y="6" width="14" height="1" fill="#ffffff"/><rect x="15" y="6" width="1" height="1" fill="#000000"/><rect x="2" y="7" width="11" height="1" fill="#000000"/><rect x="13" y="7" width="1" height="1" fill="#c0c0c0"/><rect x="14" y="7" width="1" height="1" fill="#ffffff"/><rect x="15" y="7" width="1" height="1" fill="#000000"/><rect x="2" y="8" width="1" height="1" fill="#000000"/><rect x="3" y="8" width="1" height="1" fill="#a0a0a0"/><rect x="4" y="8" width="6" height="1" fill="#ffffff"/><rect x="10" y="8" width="1" height="1" fill="#a0a0a0"/><rect x="11" y="8" width="2" height="1" fill="#000000"/><rect x="13" y="8" width="1" height="1" fill="#c0c0c0"/><rect x="14" y="8" width="1" height="1" fill="#ffff00"/><rect x="15" y="8" width="1" height="1" fill="#000000"/><rect x="2" y="9" width="1" height="1" fill="#000000"/><rect x="3" y="9" width="1" height="1" fill="#c8c8c8"/><rect x="4" y="9" width="6" height="1" fill="#ffffff"/><rect x="10" y="9" width="1" height="1" fill="#c8c8c8"/><rect x="11" y="9" width="2" height="1" fill="#000000"/><rect x="13" y="9" width="1" height="1" fill="#c0c0c0"/><rect x="14" y="9" width="1" height="1" fill="#ffffff"/><rect x="15" y="9" width="1" height="1" fill="#000000"/><rect x="1" y="10" width="2" height="1" fill="#000000"/><rect x="3" y="10" width="1" height="1" fill="#c8c8c8"/><rect x="4" y="10" width="6" height="1" fill="#ffffff"/><rect x="10" y="10" width="1" height="1" fill="#c8c8c8"/><rect x="11" y="10" width="2" height="1" fill="#000000"/><rect x="13" y="10" width="1" height="1" fill="#ffff00"/><rect x="14" y="10" width="1" height="1" fill="#ffffff"/><rect x="15" y="10" width="1" height="1" fill="#000000"/><rect x="2" y="11" width="1" height="1" fill="#000000"/><rect x="3" y="11" width="1" height="1" fill="#c8c8c8"/><rect x="4" y="11" width="6" height="1" fill="#ffffff"/><rect x="10" y="11" width="1" height="1" fill="#c8c8c8"/><rect x="11" y="11" width="2" height="1" fill="#000000"/><rect x="13" y="11" width="1" height="1" fill="#c0c0c0"/><rect x="14" y="11" width="1" height="1" fill="#ffffff"/><rect x="15" y="11" width="1" height="1" fill="#000000"/><rect x="1" y="12" width="2" height="1" fill="#000000"/><rect x="3" y="12" width="1" height="1" fill="#a0a0a0"/><rect x="4" y="12" width="6" height="1" fill="#d0d0d0"/><rect x="10" y="12" width="1" height="1" fill="#a0a0a0"/><rect x="11" y="12" width="5" height="1" fill="#000000"/><rect x="2" y="13" width="1" height="1" fill="#000000"/><rect x="3" y="13" width="8" height="1" fill="#a0a0a0"/><rect x="11" y="13" width="2" height="1" fill="#000000"/><rect x="2" y="14" width="11" height="1" fill="#000000"/></svg>
<div style="left:126px;top:242px;width:59px;height:16px;background:#000080;outline:1px dotted #c0c080;outline-offset:-1px;"></div>
<span class="t" id="t72" style="left:127.02px;top:245.00px;font-size:11px;line-height:11px;color:#fff;transform:scaleX(0.9818);">Servo Tune</span>
<div style="left:64px;top:266px;width:4px;height:1px;background:repeating-linear-gradient(90deg,#808080 0,#808080 1px,transparent 1px,transparent 2px);"></div>
<div style="left:54px;top:262px;width:9px;height:9px;background:#fff;border:1px solid #808080;box-sizing:border-box;"></div>
<div style="left:56px;top:266px;width:5px;height:1px;background:#000;"></div>
<div style="left:58px;top:264px;width:1px;height:5px;background:#000;"></div>
<svg style="left:69px;top:258px" width="16" height="16" viewBox="0 0 16 16" shape-rendering="crispEdges"><g shape-rendering="auto"><path d="M5,1.5 H15 L13.5,8 Q13,10 10,10.5 Q8,10 7,8 Z" fill="#b0b0b0" stroke="#000" stroke-width="1" /><path d="M7.5,3 L8.5,8" fill="none" stroke="#fff" stroke-width="1.5" /><path d="M10,10.5 Q9,14 5,14.2 L0.5,15.5" fill="none" stroke="#000" stroke-width="1.4" /></g><rect x="6" y="0" width="9" height="1" fill="#ffff00"/><rect x="7" y="0" width="1" height="1" fill="#fff"/><rect x="10" y="0" width="1" height="1" fill="#fff"/><rect x="13" y="0" width="1" height="1" fill="#fff"/></svg>
<span class="t" id="t73" style="left:89.04px;top:261.00px;font-size:11px;line-height:11px;color:#000;-webkit-text-stroke:0.15px #000;transform:scaleX(0.9558);">Ports (Serial &amp; Parallel)</span>
<div style="left:44px;top:282px;width:5px;height:1px;background:repeating-linear-gradient(90deg,#808080 0,#808080 1px,transparent 1px,transparent 2px);"></div>
<div style="left:35px;top:278px;width:9px;height:9px;background:#fff;border:1px solid #808080;box-sizing:border-box;"></div>
<div style="left:37px;top:282px;width:5px;height:1px;background:#000;"></div>
<div style="left:39px;top:280px;width:1px;height:5px;background:#000;"></div>
<svg style="left:49px;top:274px" width="16" height="16" viewBox="0 0 16 16" shape-rendering="crispEdges"><rect x="2" y="2" width="6" height="1" fill="#0000c0"/><rect x="3" y="1" width="4" height="1" fill="#0000c0"/><rect x="1" y="3" width="13" height="10" fill="#0000ff"/><rect x="1" y="3" width="7" height="1" fill="#0000c0"/><rect x="1" y="4" width="12" height="1" fill="#00ffff"/><rect x="1" y="4" width="1" height="8" fill="#00ffff"/><rect x="2" y="5" width="1" height="7" fill="#00c0ff"/><rect x="14" y="4" width="1" height="10" fill="#000"/><rect x="2" y="13" width="13" height="1" fill="#000"/><rect x="13" y="4" width="1" height="9" fill="#000080"/><rect x="1" y="12" width="13" height="1" fill="#000080"/><rect x="1" y="6" width="14" height="8" fill="#c000c0"/><rect x="2" y="7" width="12" height="6" fill="#a000a0"/><rect x="3" y="8" width="2" height="4" fill="#00ff00"/><rect x="6" y="8" width="1" height="3" fill="#00ff00"/><rect x="7" y="11" width="1" height="1" fill="#00ff00"/><rect x="8" y="8" width="1" height="3" fill="#00ff00"/><rect x="11" y="8" width="2" height="4" fill="#00ff00"/><rect x="15" y="5" width="1" height="9" fill="#000080"/></svg>
<span class="t" id="t74" style="left:69.99px;top:277.00px;font-size:11px;line-height:11px;color:#000;-webkit-text-stroke:0.15px #000;transform:scaleX(1.0137);">IVI Instruments</span>
<div style="left:44px;top:298px;width:5px;height:1px;background:repeating-linear-gradient(90deg,#808080 0,#808080 1px,transparent 1px,transparent 2px);"></div>
<div style="left:35px;top:294px;width:9px;height:9px;background:#fff;border:1px solid #808080;box-sizing:border-box;"></div>
<div style="left:37px;top:298px;width:5px;height:1px;background:#000;"></div>
<div style="left:39px;top:296px;width:1px;height:5px;background:#000;"></div>
<svg style="left:49px;top:290px" width="16" height="16" viewBox="0 0 16 16" shape-rendering="crispEdges"><rect x="2" y="2" width="6" height="1" fill="#0000c0"/><rect x="3" y="1" width="4" height="1" fill="#0000c0"/><rect x="1" y="3" width="13" height="10" fill="#0000ff"/><rect x="1" y="3" width="7" height="1" fill="#0000c0"/><rect x="1" y="4" width="12" height="1" fill="#00ffff"/><rect x="1" y="4" width="1" height="8" fill="#00ffff"/><rect x="2" y="5" width="1" height="7" fill="#00c0ff"/><rect x="14" y="4" width="1" height="10" fill="#000"/><rect x="2" y="13" width="13" height="1" fill="#000"/><rect x="13" y="4" width="1" height="9" fill="#000080"/><rect x="1" y="12" width="13" height="1" fill="#000080"/><rect x="4" y="5" width="9" height="7" fill="#0000c0"/><path d="M4,12 V7 L6,6 L7,8 L9,6 L11,9 L13,10 V12Z" fill="#ffff00" /><rect x="5" y="5" width="1" height="1" fill="#fff"/><rect x="8" y="5" width="1" height="1" fill="#fff"/></svg>
<span class="t" id="t75" style="left:70.09px;top:293.00px;font-size:11px;line-height:11px;color:#000;-webkit-text-stroke:0.15px #000;transform:scaleX(0.9062);">Scales</span>
<div style="left:44px;top:314px;width:5px;height:1px;background:repeating-linear-gradient(90deg,#808080 0,#808080 1px,transparent 1px,transparent 2px);"></div>
<div style="left:35px;top:310px;width:9px;height:9px;background:#fff;border:1px solid #808080;box-sizing:border-box;"></div>
<div style="left:37px;top:314px;width:5px;height:1px;background:#000;"></div>
<div style="left:39px;top:312px;width:1px;height:5px;background:#000;"></div>
<svg style="left:49px;top:306px" width="16" height="16" viewBox="0 0 16 16" shape-rendering="crispEdges"><rect x="2" y="2" width="6" height="1" fill="#0000c0"/><rect x="3" y="1" width="4" height="1" fill="#0000c0"/><rect x="1" y="3" width="13" height="10" fill="#0000ff"/><rect x="1" y="3" width="7" height="1" fill="#0000c0"/><rect x="1" y="4" width="12" height="1" fill="#00ffff"/><rect x="1" y="4" width="1" height="8" fill="#00ffff"/><rect x="2" y="5" width="1" height="7" fill="#00c0ff"/><rect x="14" y="4" width="1" height="10" fill="#000"/><rect x="2" y="13" width="13" height="1" fill="#000"/><rect x="13" y="4" width="1" height="9" fill="#000080"/><rect x="1" y="12" width="13" height="1" fill="#000080"/><rect x="4" y="5" width="10" height="9" fill="#000"/><rect x="5" y="6" width="8" height="7" fill="#e0e0e0"/><rect x="5" y="6" width="8" height="1" fill="#808080"/><rect x="6" y="8" width="4" height="2" fill="#ffff00"/><rect x="6" y="10" width="4" height="2" fill="#ff0000"/><rect x="11" y="8" width="1" height="4" fill="#808080"/><rect x="6" y="9" width="1" height="1" fill="#000"/><rect x="8" y="9" width="1" height="1" fill="#000"/></svg>
<span class="t" id="t76" style="left:69.98px;top:309.00px;font-size:11px;line-height:11px;color:#000;-webkit-text-stroke:0.15px #000;transform:scaleX(1.0238);">Software</span>
<div style="left:26px;top:330px;width:4px;height:1px;background:repeating-linear-gradient(90deg,#808080 0,#808080 1px,transparent 1px,transparent 2px);"></div>
<div style="left:16px;top:326px;width:9px;height:9px;background:#fff;border:1px solid #808080;box-sizing:border-box;"></div>
<div style="left:18px;top:330px;width:5px;height:1px;background:#000;"></div>
<div style="left:20px;top:328px;width:1px;height:5px;background:#000;"></div>
<svg style="left:31px;top:322px" width="16" height="16" viewBox="0 0 16 16" shape-rendering="crispEdges"><g shape-rendering="auto"><circle cx="8" cy="8" r="7.9" fill="#0000f0"/><path d="M2.4,3 L12.6,3 L10,10.6 L4.5,10.6 Z" fill="#fff"/><path d="M8.2,4 L11.3,4 L9.7,6.3 Z" fill="#2020d0"/><path d="M11.3,4 L12.2,3.4 L10.3,8.5 L9.7,6.3 Z" fill="#b0b0c0"/><path d="M2.8,3.3 L8.2,10.4" stroke="#a0a0a8" stroke-width="0.7" fill="none"/><path d="M0.2,3 L1.4,2.2 L1.4,8.5 Q3,10 6.2,11.6 L11.4,11.6 L11.4,10 L14.6,12.5 L11.4,15 L11.4,13.4 L6,13.4 Q2,12 0.2,9.5 Z" fill="#ffff00"/></g></svg>
<span class="t" id="t77" style="left:51.05px;top:325.00px;font-size:11px;line-height:11px;color:#000;-webkit-text-stroke:0.15px #000;transform:scaleX(0.9518);">Remote Systems</span>
<svg style="left:6px;top:5px" width="16" height="16" viewBox="0 0 16 16" shape-rendering="crispEdges"><g shape-rendering="auto"><circle cx="8" cy="8" r="7.9" fill="#0000f0"/><path d="M2.4,3 L12.6,3 L10,10.6 L4.5,10.6 Z" fill="#fff"/><path d="M8.2,4 L11.3,4 L9.7,6.3 Z" fill="#2020d0"/><path d="M11.3,4 L12.2,3.4 L10.3,8.5 L9.7,6.3 Z" fill="#b0b0c0"/><path d="M2.8,3.3 L8.2,10.4" stroke="#a0a0a8" stroke-width="0.7" fill="none"/><path d="M0.2,3 L1.4,2.2 L1.4,8.5 Q3,10 6.2,11.6 L11.4,11.6 L11.4,10 L14.6,12.5 L11.4,15 L11.4,13.4 L6,13.4 Q2,12 0.2,9.5 Z" fill="#ffff00"/></g></svg>
<svg style="left:243px;top:91px" width="15" height="14" viewBox="0 0 15 14" shape-rendering="crispEdges"><rect x="2" y="0" width="5" height="1" fill="#909090"/><rect x="1" y="1" width="1" height="1" fill="#909090"/><rect x="3" y="1" width="1" height="1" fill="#ffff00"/><rect x="5" y="1" width="1" height="1" fill="#ffff00"/><rect x="7" y="1" width="1" height="1" fill="#ffff00"/><rect x="8" y="1" width="1" height="1" fill="#909090"/><rect x="0" y="2" width="1" height="1" fill="#909090"/><rect x="1" y="2" width="1" height="1" fill="#ffff00"/><rect x="2" y="2" width="1" height="1" fill="#ffffa0"/><rect x="3" y="2" width="1" height="1" fill="#ffff00"/><rect x="4" y="2" width="1" height="1" fill="#ffffa0"/><rect x="5" y="2" width="1" height="1" fill="#ffff00"/><rect x="6" y="2" width="1" height="1" fill="#ffffa0"/><rect x="7" y="2" width="1" height="1" fill="#ffff00"/><rect x="8" y="2" width="6" height="1" fill="#909090"/><rect x="0" y="3" width="1" height="1" fill="#909090"/><rect x="1" y="3" width="13" height="1" fill="#ffffff"/><rect x="14" y="3" width="1" height="1" fill="#000000"/><rect x="0" y="4" width="1" height="1" fill="#909090"/><rect x="1" y="4" width="1" height="1" fill="#ffffff"/><rect x="2" y="4" width="1" height="1" fill="#ffff00"/><rect x="3" y="4" width="1" height="1" fill="#ffffff"/><rect x="4" y="4" width="1" height="1" fill="#ffff00"/><rect x="5" y="4" width="1" height="1" fill="#ffffff"/><rect x="6" y="4" width="1" height="1" fill="#ffff00"/><rect x="7" y="4" width="1" height="1" fill="#ffffff"/><rect x="8" y="4" width="1" height="1" fill="#ffff00"/><rect x="9" y="4" width="1" height="1" fill="#ffffff"/><rect x="10" y="4" width="1" height="1" fill="#ffff00"/><rect x="11" y="4" width="1" height="1" fill="#ffffff"/><rect x="12" y="4" width="1" height="1" fill="#ffff00"/><rect x="13" y="4" width="1" height="1" fill="#ffffff"/><rect x="14" y="4" width="1" height="1" fill="#000000"/><rect x="0" y="5" width="1" height="1" fill="#909090"/><rect x="1" y="5" width="2" height="1" fill="#ffffff"/><rect x="3" y="5" width="10" height="1" fill="#000000"/><rect x="13" y="5" width="1" height="1" fill="#c0c0c0"/><rect x="14" y="5" width="1" height="1" fill="#000000"/><rect x="0" y="6" width="1" height="1" fill="#909090"/><rect x="1" y="6" width="1" height="1" fill="#ffffff"/><rect x="2" y="6" width="1" height="1" fill="#ffff00"/><rect x="3" y="6" width="1" height="1" fill="#000000"/><rect x="4" y="6" width="1" height="1" fill="#a0a0a0"/><rect x="5" y="6" width="6" height="1" fill="#ffffff"/><rect x="11" y="6" width="1" height="1" fill="#a0a0a0"/><rect x="12" y="6" width="1" height="1" fill="#000000"/><rect x="13" y="6" width="1" height="1" fill="#c0c0c0"/><rect x="14" y="6" width="1" height="1" fill="#000000"/><rect x="0" y="7" width="1" height="1" fill="#909090"/><rect x="1" y="7" width="2" height="1" fill="#ffffff"/><rect x="3" y="7" width="1" height="1" fill="#000000"/><rect x="4" y="7" width="1" height="1" fill="#c8c8c8"/><rect x="5" y="7" width="6" height="1" fill="#ffffff"/><rect x="11" y="7" width="1" height="1" fill="#c8c8c8"/><rect x="12" y="7" width="1" height="1" fill="#000000"/><rect x="13" y="7" width="1" height="1" fill="#c0c0c0"/><rect x="14" y="7" width="1" height="1" fill="#000000"/><rect x="0" y="8" width="1" height="1" fill="#909090"/><rect x="1" y="8" width="1" height="1" fill="#ffffff"/><rect x="2" y="8" width="2" height="1" fill="#000000"/><rect x="4" y="8" width="1" height="1" fill="#c8c8c8"/><rect x="5" y="8" width="6" height="1" fill="#ffffff"/><rect x="11" y="8" width="1" height="1" fill="#c8c8c8"/><rect x="12" y="8" width="1" height="1" fill="#000000"/><rect x="13" y="8" width="1" height="1" fill="#c0c0c0"/><rect x="14" y="8" width="1" height="1" fill="#000000"/><rect x="0" y="9" width="1" height="1" fill="#909090"/><rect x="1" y="9" width="2" height="1" fill="#ffffff"/><rect x="3" y="9" width="1" height="1" fill="#000000"/><rect x="4" y="9" width="1" height="1" fill="#c8c8c8"/><rect x="5" y="9" width="6" height="1" fill="#ffffff"/><rect x="11" y="9" width="1" height="1" fill="#c8c8c8"/><rect x="12" y="9" width="1" height="1" fill="#000000"/><rect x="13" y="9" width="1" height="1" fill="#c0c0c0"/><rect x="14" y="9" width="1" height="1" fill="#000000"/><rect x="0" y="10" width="1" height="1" fill="#909090"/><rect x="1" y="10" width="1" height="1" fill="#ffffff"/><rect x="2" y="10" width="2" height="1" fill="#000000"/><rect x="4" y="10" width="1" height="1" fill="#a0a0a0"/><rect x="5" y="10" width="6" height="1" fill="#d0d0d0"/><rect x="11" y="10" width="1" height="1" fill="#a0a0a0"/><rect x="12" y="10" width="1" height="1" fill="#000000"/><rect x="13" y="10" width="1" height="1" fill="#c0c0c0"/><rect x="14" y="10" width="1" height="1" fill="#000000"/><rect x="0" y="11" width="1" height="1" fill="#909090"/><rect x="1" y="11" width="2" height="1" fill="#ffffff"/><rect x="3" y="11" width="1" height="1" fill="#000000"/><rect x="4" y="11" width="8" height="1" fill="#a0a0a0"/><rect x="12" y="11" width="1" height="1" fill="#000000"/><rect x="13" y="11" width="1" height="1" fill="#c0c0c0"/><rect x="14" y="11" width="1" height="1" fill="#000000"/><rect x="1" y="12" width="14" height="1" fill="#000000"/><rect x="3" y="13" width="10" height="1" fill="#000000"/></svg>
<svg style="left:249px;top:545px" width="15" height="14" viewBox="0 0 15 14" shape-rendering="crispEdges"><rect x="2" y="0" width="5" height="1" fill="#909090"/><rect x="1" y="1" width="1" height="1" fill="#909090"/><rect x="3" y="1" width="1" height="1" fill="#ffff00"/><rect x="5" y="1" width="1" height="1" fill="#ffff00"/><rect x="7" y="1" width="1" height="1" fill="#ffff00"/><rect x="8" y="1" width="1" height="1" fill="#909090"/><rect x="0" y="2" width="1" height="1" fill="#909090"/><rect x="1" y="2" width="1" height="1" fill="#ffff00"/><rect x="2" y="2" width="1" height="1" fill="#ffffa0"/><rect x="3" y="2" width="1" height="1" fill="#ffff00"/><rect x="4" y="2" width="1" height="1" fill="#ffffa0"/><rect x="5" y="2" width="1" height="1" fill="#ffff00"/><rect x="6" y="2" width="1" height="1" fill="#ffffa0"/><rect x="7" y="2" width="1" height="1" fill="#ffff00"/><rect x="8" y="2" width="6" height="1" fill="#909090"/><rect x="0" y="3" width="1" height="1" fill="#909090"/><rect x="1" y="3" width="13" height="1" fill="#ffffff"/><rect x="14" y="3" width="1" height="1" fill="#000000"/><rect x="0" y="4" width="1" height="1" fill="#909090"/><rect x="1" y="4" width="1" height="1" fill="#ffffff"/><rect x="2" y="4" width="1" height="1" fill="#ffff00"/><rect x="3" y="4" width="1" height="1" fill="#ffffff"/><rect x="4" y="4" width="1" height="1" fill="#ffff00"/><rect x="5" y="4" width="1" height="1" fill="#ffffff"/><rect x="6" y="4" width="1" height="1" fill="#ffff00"/><rect x="7" y="4" width="1" height="1" fill="#ffffff"/><rect x="8" y="4" width="1" height="1" fill="#ffff00"/><rect x="9" y="4" width="1" height="1" fill="#ffffff"/><rect x="10" y="4" width="1" height="1" fill="#ffff00"/><rect x="11" y="4" width="1" height="1" fill="#ffffff"/><rect x="12" y="4" width="1" height="1" fill="#ffff00"/><rect x="13" y="4" width="1" height="1" fill="#ffffff"/><rect x="14" y="4" width="1" height="1" fill="#000000"/><rect x="0" y="5" width="1" height="1" fill="#909090"/><rect x="1" y="5" width="2" height="1" fill="#ffffff"/><rect x="3" y="5" width="10" height="1" fill="#000000"/><rect x="13" y="5" width="1" height="1" fill="#c0c0c0"/><rect x="14" y="5" width="1" height="1" fill="#000000"/><rect x="0" y="6" width="1" height="1" fill="#909090"/><rect x="1" y="6" width="1" height="1" fill="#ffffff"/><rect x="2" y="6" width="1" height="1" fill="#ffff00"/><rect x="3" y="6" width="1" height="1" fill="#000000"/><rect x="4" y="6" width="1" height="1" fill="#a0a0a0"/><rect x="5" y="6" width="6" height="1" fill="#ffffff"/><rect x="11" y="6" width="1" height="1" fill="#a0a0a0"/><rect x="12" y="6" width="1" height="1" fill="#000000"/><rect x="13" y="6" width="1" height="1" fill="#c0c0c0"/><rect x="14" y="6" width="1" height="1" fill="#000000"/><rect x="0" y="7" width="1" height="1" fill="#909090"/><rect x="1" y="7" width="2" height="1" fill="#ffffff"/><rect x="3" y="7" width="1" height="1" fill="#000000"/><rect x="4" y="7" width="1" height="1" fill="#c8c8c8"/><rect x="5" y="7" width="6" height="1" fill="#ffffff"/><rect x="11" y="7" width="1" height="1" fill="#c8c8c8"/><rect x="12" y="7" width="1" height="1" fill="#000000"/><rect x="13" y="7" width="1" height="1" fill="#c0c0c0"/><rect x="14" y="7" width="1" height="1" fill="#000000"/><rect x="0" y="8" width="1" height="1" fill="#909090"/><rect x="1" y="8" width="1" height="1" fill="#ffffff"/><rect x="2" y="8" width="2" height="1" fill="#000000"/><rect x="4" y="8" width="1" height="1" fill="#c8c8c8"/><rect x="5" y="8" width="6" height="1" fill="#ffffff"/><rect x="11" y="8" width="1" height="1" fill="#c8c8c8"/><rect x="12" y="8" width="1" height="1" fill="#000000"/><rect x="13" y="8" width="1" height="1" fill="#c0c0c0"/><rect x="14" y="8" width="1" height="1" fill="#000000"/><rect x="0" y="9" width="1" height="1" fill="#909090"/><rect x="1" y="9" width="2" height="1" fill="#ffffff"/><rect x="3" y="9" width="1" height="1" fill="#000000"/><rect x="4" y="9" width="1" height="1" fill="#c8c8c8"/><rect x="5" y="9" width="6" height="1" fill="#ffffff"/><rect x="11" y="9" width="1" height="1" fill="#c8c8c8"/><rect x="12" y="9" width="1" height="1" fill="#000000"/><rect x="13" y="9" width="1" height="1" fill="#c0c0c0"/><rect x="14" y="9" width="1" height="1" fill="#000000"/><rect x="0" y="10" width="1" height="1" fill="#909090"/><rect x="1" y="10" width="1" height="1" fill="#ffffff"/><rect x="2" y="10" width="2" height="1" fill="#000000"/><rect x="4" y="10" width="1" height="1" fill="#a0a0a0"/><rect x="5" y="10" width="6" height="1" fill="#d0d0d0"/><rect x="11" y="10" width="1" height="1" fill="#a0a0a0"/><rect x="12" y="10" width="1" height="1" fill="#000000"/><rect x="13" y="10" width="1" height="1" fill="#c0c0c0"/><rect x="14" y="10" width="1" height="1" fill="#000000"/><rect x="0" y="11" width="1" height="1" fill="#909090"/><rect x="1" y="11" width="2" height="1" fill="#ffffff"/><rect x="3" y="11" width="1" height="1" fill="#000000"/><rect x="4" y="11" width="8" height="1" fill="#a0a0a0"/><rect x="12" y="11" width="1" height="1" fill="#000000"/><rect x="13" y="11" width="1" height="1" fill="#c0c0c0"/><rect x="14" y="11" width="1" height="1" fill="#000000"/><rect x="1" y="12" width="14" height="1" fill="#000000"/><rect x="3" y="13" width="10" height="1" fill="#000000"/></svg>
<svg style="left:306px;top:543px" width="15" height="14" viewBox="0 0 15 14" shape-rendering="crispEdges"><rect x="2" y="0" width="5" height="1" fill="#909090"/><rect x="1" y="1" width="1" height="1" fill="#909090"/><rect x="3" y="1" width="1" height="1" fill="#ffff00"/><rect x="5" y="1" width="1" height="1" fill="#ffff00"/><rect x="7" y="1" width="1" height="1" fill="#ffff00"/><rect x="8" y="1" width="1" height="1" fill="#909090"/><rect x="0" y="2" width="1" height="1" fill="#909090"/><rect x="1" y="2" width="1" height="1" fill="#ffff00"/><rect x="2" y="2" width="1" height="1" fill="#ffffa0"/><rect x="3" y="2" width="1" height="1" fill="#ffff00"/><rect x="4" y="2" width="1" height="1" fill="#ffffa0"/><rect x="5" y="2" width="1" height="1" fill="#ffff00"/><rect x="6" y="2" width="1" height="1" fill="#ffffa0"/><rect x="7" y="2" width="1" height="1" fill="#ffff00"/><rect x="8" y="2" width="6" height="1" fill="#909090"/><rect x="0" y="3" width="1" height="1" fill="#909090"/><rect x="1" y="3" width="13" height="1" fill="#ffffff"/><rect x="14" y="3" width="1" height="1" fill="#000000"/><rect x="0" y="4" width="1" height="1" fill="#909090"/><rect x="1" y="4" width="1" height="1" fill="#ffffff"/><rect x="2" y="4" width="1" height="1" fill="#ffff00"/><rect x="3" y="4" width="1" height="1" fill="#ffffff"/><rect x="4" y="4" width="1" height="1" fill="#ffff00"/><rect x="5" y="4" width="1" height="1" fill="#ffffff"/><rect x="6" y="4" width="1" height="1" fill="#ffff00"/><rect x="7" y="4" width="1" height="1" fill="#ffffff"/><rect x="8" y="4" width="1" height="1" fill="#ffff00"/><rect x="9" y="4" width="1" height="1" fill="#ffffff"/><rect x="10" y="4" width="1" height="1" fill="#ffff00"/><rect x="11" y="4" width="1" height="1" fill="#ffffff"/><rect x="12" y="4" width="1" height="1" fill="#ffff00"/><rect x="13" y="4" width="1" height="1" fill="#ffffff"/><rect x="14" y="4" width="1" height="1" fill="#000000"/><rect x="0" y="5" width="1" height="1" fill="#909090"/><rect x="1" y="5" width="2" height="1" fill="#ffffff"/><rect x="3" y="5" width="10" height="1" fill="#000000"/><rect x="13" y="5" width="1" height="1" fill="#c0c0c0"/><rect x="14" y="5" width="1" height="1" fill="#000000"/><rect x="0" y="6" width="1" height="1" fill="#909090"/><rect x="1" y="6" width="1" height="1" fill="#ffffff"/><rect x="2" y="6" width="1" height="1" fill="#ffff00"/><rect x="3" y="6" width="1" height="1" fill="#000000"/><rect x="4" y="6" width="1" height="1" fill="#a0a0a0"/><rect x="5" y="6" width="6" height="1" fill="#ffffff"/><rect x="11" y="6" width="1" height="1" fill="#a0a0a0"/><rect x="12" y="6" width="1" height="1" fill="#000000"/><rect x="13" y="6" width="1" height="1" fill="#c0c0c0"/><rect x="14" y="6" width="1" height="1" fill="#000000"/><rect x="0" y="7" width="1" height="1" fill="#909090"/><rect x="1" y="7" width="2" height="1" fill="#ffffff"/><rect x="3" y="7" width="1" height="1" fill="#000000"/><rect x="4" y="7" width="1" height="1" fill="#c8c8c8"/><rect x="5" y="7" width="6" height="1" fill="#ffffff"/><rect x="11" y="7" width="1" height="1" fill="#c8c8c8"/><rect x="12" y="7" width="1" height="1" fill="#000000"/><rect x="13" y="7" width="1" height="1" fill="#c0c0c0"/><rect x="14" y="7" width="1" height="1" fill="#000000"/><rect x="0" y="8" width="1" height="1" fill="#909090"/><rect x="1" y="8" width="1" height="1" fill="#ffffff"/><rect x="2" y="8" width="2" height="1" fill="#000000"/><rect x="4" y="8" width="1" height="1" fill="#c8c8c8"/><rect x="5" y="8" width="6" height="1" fill="#ffffff"/><rect x="11" y="8" width="1" height="1" fill="#c8c8c8"/><rect x="12" y="8" width="1" height="1" fill="#000000"/><rect x="13" y="8" width="1" height="1" fill="#c0c0c0"/><rect x="14" y="8" width="1" height="1" fill="#000000"/><rect x="0" y="9" width="1" height="1" fill="#909090"/><rect x="1" y="9" width="2" height="1" fill="#ffffff"/><rect x="3" y="9" width="1" height="1" fill="#000000"/><rect x="4" y="9" width="1" height="1" fill="#c8c8c8"/><rect x="5" y="9" width="6" height="1" fill="#ffffff"/><rect x="11" y="9" width="1" height="1" fill="#c8c8c8"/><rect x="12" y="9" width="1" height="1" fill="#000000"/><rect x="13" y="9" width="1" height="1" fill="#c0c0c0"/><rect x="14" y="9" width="1" height="1" fill="#000000"/><rect x="0" y="10" width="1" height="1" fill="#909090"/><rect x="1" y="10" width="1" height="1" fill="#ffffff"/><rect x="2" y="10" width="2" height="1" fill="#000000"/><rect x="4" y="10" width="1" height="1" fill="#a0a0a0"/><rect x="5" y="10" width="6" height="1" fill="#d0d0d0"/><rect x="11" y="10" width="1" height="1" fill="#a0a0a0"/><rect x="12" y="10" width="1" height="1" fill="#000000"/><rect x="13" y="10" width="1" height="1" fill="#c0c0c0"/><rect x="14" y="10" width="1" height="1" fill="#000000"/><rect x="0" y="11" width="1" height="1" fill="#909090"/><rect x="1" y="11" width="2" height="1" fill="#ffffff"/><rect x="3" y="11" width="1" height="1" fill="#000000"/><rect x="4" y="11" width="8" height="1" fill="#a0a0a0"/><rect x="12" y="11" width="1" height="1" fill="#000000"/><rect x="13" y="11" width="1" height="1" fill="#c0c0c0"/><rect x="14" y="11" width="1" height="1" fill="#000000"/><rect x="1" y="12" width="14" height="1" fill="#000000"/><rect x="3" y="13" width="10" height="1" fill="#000000"/></svg>
<svg style="left:413px;top:543px" width="15" height="14" viewBox="0 0 15 14" shape-rendering="crispEdges"><rect x="2" y="0" width="5" height="1" fill="#909090"/><rect x="1" y="1" width="1" height="1" fill="#909090"/><rect x="3" y="1" width="1" height="1" fill="#ffff00"/><rect x="5" y="1" width="1" height="1" fill="#ffff00"/><rect x="7" y="1" width="1" height="1" fill="#ffff00"/><rect x="8" y="1" width="1" height="1" fill="#909090"/><rect x="0" y="2" width="1" height="1" fill="#909090"/><rect x="1" y="2" width="1" height="1" fill="#ffff00"/><rect x="2" y="2" width="1" height="1" fill="#ffffa0"/><rect x="3" y="2" width="1" height="1" fill="#ffff00"/><rect x="4" y="2" width="1" height="1" fill="#ffffa0"/><rect x="5" y="2" width="1" height="1" fill="#ffff00"/><rect x="6" y="2" width="1" height="1" fill="#ffffa0"/><rect x="7" y="2" width="1" height="1" fill="#ffff00"/><rect x="8" y="2" width="6" height="1" fill="#909090"/><rect x="0" y="3" width="1" height="1" fill="#909090"/><rect x="1" y="3" width="13" height="1" fill="#ffffff"/><rect x="14" y="3" width="1" height="1" fill="#000000"/><rect x="0" y="4" width="1" height="1" fill="#909090"/><rect x="1" y="4" width="1" height="1" fill="#ffffff"/><rect x="2" y="4" width="1" height="1" fill="#ffff00"/><rect x="3" y="4" width="1" height="1" fill="#ffffff"/><rect x="4" y="4" width="1" height="1" fill="#ffff00"/><rect x="5" y="4" width="1" height="1" fill="#ffffff"/><rect x="6" y="4" width="1" height="1" fill="#ffff00"/><rect x="7" y="4" width="1" height="1" fill="#ffffff"/><rect x="8" y="4" width="1" height="1" fill="#ffff00"/><rect x="9" y="4" width="1" height="1" fill="#ffffff"/><rect x="10" y="4" width="1" height="1" fill="#ffff00"/><rect x="11" y="4" width="1" height="1" fill="#ffffff"/><rect x="12" y="4" width="1" height="1" fill="#ffff00"/><rect x="13" y="4" width="1" height="1" fill="#ffffff"/><rect x="14" y="4" width="1" height="1" fill="#000000"/><rect x="0" y="5" width="1" height="1" fill="#909090"/><rect x="1" y="5" width="2" height="1" fill="#ffffff"/><rect x="3" y="5" width="10" height="1" fill="#000000"/><rect x="13" y="5" width="1" height="1" fill="#c0c0c0"/><rect x="14" y="5" width="1" height="1" fill="#000000"/><rect x="0" y="6" width="1" height="1" fill="#909090"/><rect x="1" y="6" width="1" height="1" fill="#ffffff"/><rect x="2" y="6" width="1" height="1" fill="#ffff00"/><rect x="3" y="6" width="1" height="1" fill="#000000"/><rect x="4" y="6" width="1" height="1" fill="#a0a0a0"/><rect x="5" y="6" width="6" height="1" fill="#ffffff"/><rect x="11" y="6" width="1" height="1" fill="#a0a0a0"/><rect x="12" y="6" width="1" height="1" fill="#000000"/><rect x="13" y="6" width="1" height="1" fill="#c0c0c0"/><rect x="14" y="6" width="1" height="1" fill="#000000"/><rect x="0" y="7" width="1" height="1" fill="#909090"/><rect x="1" y="7" width="2" height="1" fill="#ffffff"/><rect x="3" y="7" width="1" height="1" fill="#000000"/><rect x="4" y="7" width="1" height="1" fill="#c8c8c8"/><rect x="5" y="7" width="6" height="1" fill="#ffffff"/><rect x="11" y="7" width="1" height="1" fill="#c8c8c8"/><rect x="12" y="7" width="1" height="1" fill="#000000"/><rect x="13" y="7" width="1" height="1" fill="#c0c0c0"/><rect x="14" y="7" width="1" height="1" fill="#000000"/><rect x="0" y="8" width="1" height="1" fill="#909090"/><rect x="1" y="8" width="1" height="1" fill="#ffffff"/><rect x="2" y="8" width="2" height="1" fill="#000000"/><rect x="4" y="8" width="1" height="1" fill="#c8c8c8"/><rect x="5" y="8" width="6" height="1" fill="#ffffff"/><rect x="11" y="8" width="1" height="1" fill="#c8c8c8"/><rect x="12" y="8" width="1" height="1" fill="#000000"/><rect x="13" y="8" width="1" height="1" fill="#c0c0c0"/><rect x="14" y="8" width="1" height="1" fill="#000000"/><rect x="0" y="9" width="1" height="1" fill="#909090"/><rect x="1" y="9" width="2" height="1" fill="#ffffff"/><rect x="3" y="9" width="1" height="1" fill="#000000"/><rect x="4" y="9" width="1" height="1" fill="#c8c8c8"/><rect x="5" y="9" width="6" height="1" fill="#ffffff"/><rect x="11" y="9" width="1" height="1" fill="#c8c8c8"/><rect x="12" y="9" width="1" height="1" fill="#000000"/><rect x="13" y="9" width="1" height="1" fill="#c0c0c0"/><rect x="14" y="9" width="1" height="1" fill="#000000"/><rect x="0" y="10" width="1" height="1" fill="#909090"/><rect x="1" y="10" width="1" height="1" fill="#ffffff"/><rect x="2" y="10" width="2" height="1" fill="#000000"/><rect x="4" y="10" width="1" height="1" fill="#a0a0a0"/><rect x="5" y="10" width="6" height="1" fill="#d0d0d0"/><rect x="11" y="10" width="1" height="1" fill="#a0a0a0"/><rect x="12" y="10" width="1" height="1" fill="#000000"/><rect x="13" y="10" width="1" height="1" fill="#c0c0c0"/><rect x="14" y="10" width="1" height="1" fill="#000000"/><rect x="0" y="11" width="1" height="1" fill="#909090"/><rect x="1" y="11" width="2" height="1" fill="#ffffff"/><rect x="3" y="11" width="1" height="1" fill="#000000"/><rect x="4" y="11" width="8" height="1" fill="#a0a0a0"/><rect x="12" y="11" width="1" height="1" fill="#000000"/><rect x="13" y="11" width="1" height="1" fill="#c0c0c0"/><rect x="14" y="11" width="1" height="1" fill="#000000"/><rect x="1" y="12" width="14" height="1" fill="#000000"/><rect x="3" y="13" width="10" height="1" fill="#000000"/></svg>
<svg style="left:494px;top:543px" width="15" height="14" viewBox="0 0 15 14" shape-rendering="crispEdges"><rect x="2" y="0" width="5" height="1" fill="#909090"/><rect x="1" y="1" width="1" height="1" fill="#909090"/><rect x="3" y="1" width="1" height="1" fill="#ffff00"/><rect x="5" y="1" width="1" height="1" fill="#ffff00"/><rect x="7" y="1" width="1" height="1" fill="#ffff00"/><rect x="8" y="1" width="1" height="1" fill="#909090"/><rect x="0" y="2" width="1" height="1" fill="#909090"/><rect x="1" y="2" width="1" height="1" fill="#ffff00"/><rect x="2" y="2" width="1" height="1" fill="#ffffa0"/><rect x="3" y="2" width="1" height="1" fill="#ffff00"/><rect x="4" y="2" width="1" height="1" fill="#ffffa0"/><rect x="5" y="2" width="1" height="1" fill="#ffff00"/><rect x="6" y="2" width="1" height="1" fill="#ffffa0"/><rect x="7" y="2" width="1" height="1" fill="#ffff00"/><rect x="8" y="2" width="6" height="1" fill="#909090"/><rect x="0" y="3" width="1" height="1" fill="#909090"/><rect x="1" y="3" width="13" height="1" fill="#ffffff"/><rect x="14" y="3" width="1" height="1" fill="#000000"/><rect x="0" y="4" width="1" height="1" fill="#909090"/><rect x="1" y="4" width="1" height="1" fill="#ffffff"/><rect x="2" y="4" width="1" height="1" fill="#ffff00"/><rect x="3" y="4" width="1" height="1" fill="#ffffff"/><rect x="4" y="4" width="1" height="1" fill="#ffff00"/><rect x="5" y="4" width="1" height="1" fill="#ffffff"/><rect x="6" y="4" width="1" height="1" fill="#ffff00"/><rect x="7" y="4" width="1" height="1" fill="#ffffff"/><rect x="8" y="4" width="1" height="1" fill="#ffff00"/><rect x="9" y="4" width="1" height="1" fill="#ffffff"/><rect x="10" y="4" width="1" height="1" fill="#ffff00"/><rect x="11" y="4" width="1" height="1" fill="#ffffff"/><rect x="12" y="4" width="1" height="1" fill="#ffff00"/><rect x="13" y="4" width="1" height="1" fill="#ffffff"/><rect x="14" y="4" width="1" height="1" fill="#000000"/><rect x="0" y="5" width="1" height="1" fill="#909090"/><rect x="1" y="5" width="2" height="1" fill="#ffffff"/><rect x="3" y="5" width="10" height="1" fill="#000000"/><rect x="13" y="5" width="1" height="1" fill="#c0c0c0"/><rect x="14" y="5" width="1" height="1" fill="#000000"/><rect x="0" y="6" width="1" height="1" fill="#909090"/><rect x="1" y="6" width="1" height="1" fill="#ffffff"/><rect x="2" y="6" width="1" height="1" fill="#ffff00"/><rect x="3" y="6" width="1" height="1" fill="#000000"/><rect x="4" y="6" width="1" height="1" fill="#a0a0a0"/><rect x="5" y="6" width="6" height="1" fill="#ffffff"/><rect x="11" y="6" width="1" height="1" fill="#a0a0a0"/><rect x="12" y="6" width="1" height="1" fill="#000000"/><rect x="13" y="6" width="1" height="1" fill="#c0c0c0"/><rect x="14" y="6" width="1" height="1" fill="#000000"/><rect x="0" y="7" width="1" height="1" fill="#909090"/><rect x="1" y="7" width="2" height="1" fill="#ffffff"/><rect x="3" y="7" width="1" height="1" fill="#000000"/><rect x="4" y="7" width="1" height="1" fill="#c8c8c8"/><rect x="5" y="7" width="6" height="1" fill="#ffffff"/><rect x="11" y="7" width="1" height="1" fill="#c8c8c8"/><rect x="12" y="7" width="1" height="1" fill="#000000"/><rect x="13" y="7" width="1" height="1" fill="#c0c0c0"/><rect x="14" y="7" width="1" height="1" fill="#000000"/><rect x="0" y="8" width="1" height="1" fill="#909090"/><rect x="1" y="8" width="1" height="1" fill="#ffffff"/><rect x="2" y="8" width="2" height="1" fill="#000000"/><rect x="4" y="8" width="1" height="1" fill="#c8c8c8"/><rect x="5" y="8" width="6" height="1" fill="#ffffff"/><rect x="11" y="8" width="1" height="1" fill="#c8c8c8"/><rect x="12" y="8" width="1" height="1" fill="#000000"/><rect x="13" y="8" width="1" height="1" fill="#c0c0c0"/><rect x="14" y="8" width="1" height="1" fill="#000000"/><rect x="0" y="9" width="1" height="1" fill="#909090"/><rect x="1" y="9" width="2" height="1" fill="#ffffff"/><rect x="3" y="9" width="1" height="1" fill="#000000"/><rect x="4" y="9" width="1" height="1" fill="#c8c8c8"/><rect x="5" y="9" width="6" height="1" fill="#ffffff"/><rect x="11" y="9" width="1" height="1" fill="#c8c8c8"/><rect x="12" y="9" width="1" height="1" fill="#000000"/><rect x="13" y="9" width="1" height="1" fill="#c0c0c0"/><rect x="14" y="9" width="1" height="1" fill="#000000"/><rect x="0" y="10" width="1" height="1" fill="#909090"/><rect x="1" y="10" width="1" height="1" fill="#ffffff"/><rect x="2" y="10" width="2" height="1" fill="#000000"/><rect x="4" y="10" width="1" height="1" fill="#a0a0a0"/><rect x="5" y="10" width="6" height="1" fill="#d0d0d0"/><rect x="11" y="10" width="1" height="1" fill="#a0a0a0"/><rect x="12" y="10" width="1" height="1" fill="#000000"/><rect x="13" y="10" width="1" height="1" fill="#c0c0c0"/><rect x="14" y="10" width="1" height="1" fill="#000000"/><rect x="0" y="11" width="1" height="1" fill="#909090"/><rect x="1" y="11" width="2" height="1" fill="#ffffff"/><rect x="3" y="11" width="1" height="1" fill="#000000"/><rect x="4" y="11" width="8" height="1" fill="#a0a0a0"/><rect x="12" y="11" width="1" height="1" fill="#000000"/><rect x="13" y="11" width="1" height="1" fill="#c0c0c0"/><rect x="14" y="11" width="1" height="1" fill="#000000"/><rect x="1" y="12" width="14" height="1" fill="#000000"/><rect x="3" y="13" width="10" height="1" fill="#000000"/></svg>
<svg style="left:553px;top:543px" width="15" height="14" viewBox="0 0 15 14" shape-rendering="crispEdges"><rect x="2" y="0" width="5" height="1" fill="#909090"/><rect x="1" y="1" width="1" height="1" fill="#909090"/><rect x="3" y="1" width="1" height="1" fill="#ffff00"/><rect x="5" y="1" width="1" height="1" fill="#ffff00"/><rect x="7" y="1" width="1" height="1" fill="#ffff00"/><rect x="8" y="1" width="1" height="1" fill="#909090"/><rect x="0" y="2" width="1" height="1" fill="#909090"/><rect x="1" y="2" width="1" height="1" fill="#ffff00"/><rect x="2" y="2" width="1" height="1" fill="#ffffa0"/><rect x="3" y="2" width="1" height="1" fill="#ffff00"/><rect x="4" y="2" width="1" height="1" fill="#ffffa0"/><rect x="5" y="2" width="1" height="1" fill="#ffff00"/><rect x="6" y="2" width="1" height="1" fill="#ffffa0"/><rect x="7" y="2" width="1" height="1" fill="#ffff00"/><rect x="8" y="2" width="6" height="1" fill="#909090"/><rect x="0" y="3" width="1" height="1" fill="#909090"/><rect x="1" y="3" width="13" height="1" fill="#ffffff"/><rect x="14" y="3" width="1" height="1" fill="#000000"/><rect x="0" y="4" width="1" height="1" fill="#909090"/><rect x="1" y="4" width="1" height="1" fill="#ffffff"/><rect x="2" y="4" width="1" height="1" fill="#ffff00"/><rect x="3" y="4" width="1" height="1" fill="#ffffff"/><rect x="4" y="4" width="1" height="1" fill="#ffff00"/><rect x="5" y="4" width="1" height="1" fill="#ffffff"/><rect x="6" y="4" width="1" height="1" fill="#ffff00"/><rect x="7" y="4" width="1" height="1" fill="#ffffff"/><rect x="8" y="4" width="1" height="1" fill="#ffff00"/><rect x="9" y="4" width="1" height="1" fill="#ffffff"/><rect x="10" y="4" width="1" height="1" fill="#ffff00"/><rect x="11" y="4" width="1" height="1" fill="#ffffff"/><rect x="12" y="4" width="1" height="1" fill="#ffff00"/><rect x="13" y="4" width="1" height="1" fill="#ffffff"/><rect x="14" y="4" width="1" height="1" fill="#000000"/><rect x="0" y="5" width="1" height="1" fill="#909090"/><rect x="1" y="5" width="2" height="1" fill="#ffffff"/><rect x="3" y="5" width="10" height="1" fill="#000000"/><rect x="13" y="5" width="1" height="1" fill="#c0c0c0"/><rect x="14" y="5" width="1" height="1" fill="#000000"/><rect x="0" y="6" width="1" height="1" fill="#909090"/><rect x="1" y="6" width="1" height="1" fill="#ffffff"/><rect x="2" y="6" width="1" height="1" fill="#ffff00"/><rect x="3" y="6" width="1" height="1" fill="#000000"/><rect x="4" y="6" width="1" height="1" fill="#a0a0a0"/><rect x="5" y="6" width="6" height="1" fill="#ffffff"/><rect x="11" y="6" width="1" height="1" fill="#a0a0a0"/><rect x="12" y="6" width="1" height="1" fill="#000000"/><rect x="13" y="6" width="1" height="1" fill="#c0c0c0"/><rect x="14" y="6" width="1" height="1" fill="#000000"/><rect x="0" y="7" width="1" height="1" fill="#909090"/><rect x="1" y="7" width="2" height="1" fill="#ffffff"/><rect x="3" y="7" width="1" height="1" fill="#000000"/><rect x="4" y="7" width="1" height="1" fill="#c8c8c8"/><rect x="5" y="7" width="6" height="1" fill="#ffffff"/><rect x="11" y="7" width="1" height="1" fill="#c8c8c8"/><rect x="12" y="7" width="1" height="1" fill="#000000"/><rect x="13" y="7" width="1" height="1" fill="#c0c0c0"/><rect x="14" y="7" width="1" height="1" fill="#000000"/><rect x="0" y="8" width="1" height="1" fill="#909090"/><rect x="1" y="8" width="1" height="1" fill="#ffffff"/><rect x="2" y="8" width="2" height="1" fill="#000000"/><rect x="4" y="8" width="1" height="1" fill="#c8c8c8"/><rect x="5" y="8" width="6" height="1" fill="#ffffff"/><rect x="11" y="8" width="1" height="1" fill="#c8c8c8"/><rect x="12" y="8" width="1" height="1" fill="#000000"/><rect x="13" y="8" width="1" height="1" fill="#c0c0c0"/><rect x="14" y="8" width="1" height="1" fill="#000000"/><rect x="0" y="9" width="1" height="1" fill="#909090"/><rect x="1" y="9" width="2" height="1" fill="#ffffff"/><rect x="3" y="9" width="1" height="1" fill="#000000"/><rect x="4" y="9" width="1" height="1" fill="#c8c8c8"/><rect x="5" y="9" width="6" height="1" fill="#ffffff"/><rect x="11" y="9" width="1" height="1" fill="#c8c8c8"/><rect x="12" y="9" width="1" height="1" fill="#000000"/><rect x="13" y="9" width="1" height="1" fill="#c0c0c0"/><rect x="14" y="9" width="1" height="1" fill="#000000"/><rect x="0" y="10" width="1" height="1" fill="#909090"/><rect x="1" y="10" width="1" height="1" fill="#ffffff"/><rect x="2" y="10" width="2" height="1" fill="#000000"/><rect x="4" y="10" width="1" height="1" fill="#a0a0a0"/><rect x="5" y="10" width="6" height="1" fill="#d0d0d0"/><rect x="11" y="10" width="1" height="1" fill="#a0a0a0"/><rect x="12" y="10" width="1" height="1" fill="#000000"/><rect x="13" y="10" width="1" height="1" fill="#c0c0c0"/><rect x="14" y="10" width="1" height="1" fill="#000000"/><rect x="0" y="11" width="1" height="1" fill="#909090"/><rect x="1" y="11" width="2" height="1" fill="#ffffff"/><rect x="3" y="11" width="1" height="1" fill="#000000"/><rect x="4" y="11" width="8" height="1" fill="#a0a0a0"/><rect x="12" y="11" width="1" height="1" fill="#000000"/><rect x="13" y="11" width="1" height="1" fill="#c0c0c0"/><rect x="14" y="11" width="1" height="1" fill="#000000"/><rect x="1" y="12" width="14" height="1" fill="#000000"/><rect x="3" y="13" width="10" height="1" fill="#000000"/></svg>
<svg style="left:20px;top:49px" width="16" height="15" viewBox="0 0 16 15" shape-rendering="crispEdges"><path d="M4.5,0.5 H11.5 L15.5,4.5 V10.5 L11.5,14.5 H4.5 L0.5,10.5 V4.5 Z" fill="#fff" stroke="#000" stroke-width="1" shape-rendering="auto"/><path d="M5,2 H11 L14,5 V10 L11,13 H5 L2,10 V5 Z" fill="#ff0000" shape-rendering="auto"/></svg>
<svg style="left:66px;top:50px" width="16" height="16" viewBox="0 0 16 16" shape-rendering="crispEdges"><g shape-rendering="auto"><path d="M1,1 H7 Q11,1.5 13,5 L15,4.5 L14.5,9 L10,7.5 L11.5,6.5 Q10,4 7,4 H1 Z" fill="#ff0000" stroke="#000" stroke-width="1" /><path d="M0,6.5 H6 L14,15" fill="none" stroke="#000" stroke-width="1" /></g></svg>
<svg style="left:109px;top:51px" width="14" height="13" viewBox="0 0 14 13" shape-rendering="crispEdges"><g shape-rendering="auto"><path d="M1,1 L13,11 M12.5,0.5 L2,12" fill="none" stroke="#800000" stroke-width="2" /></g></svg>
<svg style="left:148px;top:50px" width="16" height="15" viewBox="0 0 16 15" shape-rendering="crispEdges"><rect x="2" y="0" width="5" height="1" fill="#ffff60"/><rect x="1" y="1" width="7" height="2" fill="#ffff00"/><rect x="2" y="1" width="1" height="1" fill="#fff"/><rect x="4" y="1" width="1" height="1" fill="#fff"/><rect x="6" y="1" width="1" height="1" fill="#fff"/><rect x="1" y="3" width="12" height="2" fill="#fff"/><rect x="2" y="4" width="1" height="1" fill="#ffff00"/><rect x="4" y="4" width="1" height="1" fill="#ffff00"/><rect x="6" y="4" width="1" height="1" fill="#ffff00"/><rect x="8" y="4" width="1" height="1" fill="#ffff00"/><rect x="10" y="4" width="1" height="1" fill="#ffff00"/><rect x="12" y="4" width="1" height="1" fill="#ffff00"/><rect x="1" y="5" width="2" height="4" fill="#fff"/><rect x="3" y="5" width="10" height="5" fill="#008000"/><rect x="5" y="6" width="2" height="2" fill="#fff"/><rect x="9" y="6" width="2" height="2" fill="#fff"/><rect x="6" y="7" width="1" height="1" fill="#004000"/><rect x="10" y="7" width="1" height="1" fill="#004000"/><rect x="13" y="3" width="1" height="9" fill="#c0c0c0"/><rect x="14" y="3" width="1" height="10" fill="#000"/><rect x="13" y="3" width="1" height="1" fill="#000"/><rect x="0" y="8" width="3" height="2" fill="#008080"/><rect x="0" y="10" width="3" height="3" fill="#0000c0"/><rect x="0" y="13" width="3" height="1" fill="#000080"/><g shape-rendering="auto"><path d="M3,9 L5,8.5 L7,10 L12,9.5 L13,10.5 L9,12 L12,12 L12,13 L8,14.5 L4,13.5 L3,13 Z" fill="#fff" stroke="#000" stroke-width="0.8" /></g></svg>
<svg style="left:193px;top:50px" width="16" height="15" viewBox="0 0 16 15" shape-rendering="crispEdges"><rect x="2" y="0" width="5" height="1" fill="#ffff60"/><rect x="1" y="1" width="7" height="2" fill="#ffff00"/><rect x="2" y="1" width="1" height="1" fill="#fff"/><rect x="4" y="1" width="1" height="1" fill="#fff"/><rect x="6" y="1" width="1" height="1" fill="#fff"/><rect x="1" y="3" width="12" height="2" fill="#fff"/><rect x="2" y="4" width="1" height="1" fill="#ffff00"/><rect x="4" y="4" width="1" height="1" fill="#ffff00"/><rect x="6" y="4" width="1" height="1" fill="#ffff00"/><rect x="8" y="4" width="1" height="1" fill="#ffff00"/><rect x="10" y="4" width="1" height="1" fill="#ffff00"/><rect x="12" y="4" width="1" height="1" fill="#ffff00"/><rect x="1" y="5" width="2" height="4" fill="#fff"/><rect x="3" y="5" width="10" height="5" fill="#008000"/><rect x="5" y="6" width="2" height="2" fill="#fff"/><rect x="9" y="6" width="2" height="2" fill="#fff"/><rect x="6" y="7" width="1" height="1" fill="#004000"/><rect x="10" y="7" width="1" height="1" fill="#004000"/><rect x="13" y="3" width="1" height="9" fill="#c0c0c0"/><rect x="14" y="3" width="1" height="10" fill="#000"/><rect x="13" y="3" width="1" height="1" fill="#000"/><rect x="0" y="8" width="3" height="2" fill="#008080"/><rect x="0" y="10" width="3" height="3" fill="#0000c0"/><rect x="0" y="13" width="3" height="1" fill="#000080"/><g shape-rendering="auto"><path d="M3,9 L5,8.5 L7,10 L12,9.5 L13,10.5 L9,12 L12,12 L12,13 L8,14.5 L4,13.5 L3,13 Z" fill="#fff" stroke="#000" stroke-width="0.8" /></g></svg>
<svg style="left:252px;top:50px" width="14" height="15" viewBox="0 0 14 15" shape-rendering="crispEdges"><rect x="0" y="0" width="10" height="14" fill="#e4e4e4"/><rect x="10" y="3" width="3" height="11" fill="#e4e4e4"/><path d="M10,0 L13,3 H10Z" fill="#fff" stroke="#000" stroke-width="1" shape-rendering="auto"/><rect x="13" y="3" width="1" height="12" fill="#000"/><rect x="0" y="14" width="14" height="1" fill="#000"/><rect x="0" y="0" width="1" height="14" fill="#f8f8f8"/><g shape-rendering="auto"><path d="M3,6 Q3.5,3 7,3 L7,1.5 L10,4 L7,6.5 L7,5 Q5,5 5,7 Z" fill="#008000" /><path d="M10.5,8 Q10,11 6.5,11 L6.5,12.5 L3.5,10 L6.5,7.5 L6.5,9 Q8.5,9 8.5,7 Z" fill="#008000" /><path d="M3,6 Q3.5,4 5,3.5" fill="none" stroke="#008080" stroke-width="1" /><path d="M10.5,8 Q10,10 8.5,10.5" fill="none" stroke="#008080" stroke-width="1" /></g></svg>
<svg style="left:309px;top:50px" width="15" height="15" viewBox="0 0 15 15" shape-rendering="crispEdges"><g shape-rendering="auto"><path d="M3.5,1.5 H10 L13.5,5 V14.5 H3.5 Z" fill="#fff" stroke="#000" stroke-width="1" /><path d="M10,1.5 V5 H13.5" fill="none" stroke="#000" stroke-width="1" /></g><rect x="5" y="5" width="5" height="1" fill="#000"/><rect x="5" y="7" width="7" height="1" fill="#000"/><rect x="5" y="9" width="7" height="1" fill="#000"/><rect x="5" y="11" width="7" height="1" fill="#000"/><rect x="5" y="13" width="7" height="1" fill="#000"/><g shape-rendering="auto"><path d="M0,0 L5,5 M5,0.5 L0.5,5 M2.5,0 V6 M0,2.5 H5.5" fill="none" stroke="#ffff00" stroke-width="1" /></g></svg>
<svg style="left:670px;top:90px" width="17" height="17" viewBox="0 0 17 17" shape-rendering="crispEdges"><g shape-rendering="auto"><path d="M7.5,0.7 Q8.5,0.3 9.5,1.2 L15.5,6.8 Q16.3,7.8 15.5,8.8 L9,15.5 Q8,16.2 7,15.5 L1,9 Q0.3,8 1,7 Z" fill="#fff" stroke="#000" stroke-width="1.2" /><path d="M1.5,4.5 L5,1.2 L7,3 L3.2,6.8 Z" fill="#808080" stroke="#000" stroke-width="1.1" /><path d="M3,4.6 L5,2.8" fill="none" stroke="#808080" stroke-width="1" /><path d="M5,8.5 L8,11.5 L8.5,3.5" fill="none" stroke="#ff0000" stroke-width="1.1" /><path d="M9.5,4 V11.5" fill="none" stroke="#000" stroke-width="1" /></g></svg>
<svg style="left:252px;top:120px" width="32" height="27" viewBox="0 0 32 27" shape-rendering="crispEdges"><defs><pattern id="chk252" width="2" height="2" patternUnits="userSpaceOnUse"><rect width="2" height="2" fill="#ffff00"/><rect width="1" height="1" fill="#f4f4b0"/><rect x="1" y="1" width="1" height="1" fill="#f4f4b0"/></pattern></defs><path d="M1,5 L4.5,1 H12.5 L15.5,5 Z" fill="#ffffd8" shape-rendering="auto"/><rect x="4" y="2" width="9" height="2" fill="url(#chk252)"/><rect x="3" y="4" width="11" height="1" fill="#ffffe8"/><path d="M0.5,5.5 L4.5,0.5 H12.5 L15.8,4.5 H31" fill="none" stroke="#808080" stroke-width="1" shape-rendering="auto"/><rect x="0" y="5" width="1" height="21" fill="#e8e8e8"/><rect x="1" y="5" width="29" height="1" fill="#fff"/><rect x="1" y="5" width="1" height="20" fill="#fff"/><rect x="2" y="6" width="28" height="19" fill="url(#chk252)"/><rect x="30" y="5" width="1" height="21" fill="#808000"/><rect x="31" y="5" width="1" height="22" fill="#000"/><rect x="1" y="25" width="30" height="1" fill="#808000"/><rect x="1" y="26" width="31" height="1" fill="#000"/><rect x="7" y="9" width="22" height="16" fill="#000"/><rect x="8" y="10" width="20" height="1" fill="#c0c0c0"/><rect x="8" y="11" width="20" height="2" fill="#e0e0e0"/><rect x="8" y="13" width="20" height="6" fill="#fff"/><rect x="8" y="19" width="20" height="2" fill="#d0d0d0"/><rect x="8" y="21" width="20" height="1" fill="#a0a0a0"/><rect x="8" y="22" width="20" height="2" fill="#808080"/><rect x="4" y="14" width="3" height="5" fill="#000"/><rect x="5" y="15" width="2" height="3" fill="#fff"/></svg>
<svg style="left:549px;top:478px" width="32" height="27" viewBox="0 0 32 27" shape-rendering="crispEdges"><defs><pattern id="chk549" width="2" height="2" patternUnits="userSpaceOnUse"><rect width="2" height="2" fill="#ffff00"/><rect width="1" height="1" fill="#f4f4b0"/><rect x="1" y="1" width="1" height="1" fill="#f4f4b0"/></pattern></defs><path d="M1,5 L4.5,1 H12.5 L15.5,5 Z" fill="#ffffd8" shape-rendering="auto"/><rect x="4" y="2" width="9" height="2" fill="url(#chk549)"/><rect x="3" y="4" width="11" height="1" fill="#ffffe8"/><path d="M0.5,5.5 L4.5,0.5 H12.5 L15.8,4.5 H31" fill="none" stroke="#808080" stroke-width="1" shape-rendering="auto"/><rect x="0" y="5" width="1" height="21" fill="#e8e8e8"/><rect x="1" y="5" width="29" height="1" fill="#fff"/><rect x="1" y="5" width="1" height="20" fill="#fff"/><rect x="2" y="6" width="28" height="19" fill="url(#chk549)"/><rect x="30" y="5" width="1" height="21" fill="#808000"/><rect x="31" y="5" width="1" height="22" fill="#000"/><rect x="1" y="25" width="30" height="1" fill="#808000"/><rect x="1" y="26" width="31" height="1" fill="#000"/><rect x="6" y="11" width="22" height="12" fill="#006800"/><rect x="6" y="11" width="21" height="11" fill="#008000"/><rect x="16" y="11" width="1" height="11" fill="#b0d0b0"/><rect x="11" y="16" width="5" height="1" fill="#b0d0b0"/><rect x="9" y="13" width="3" height="2" fill="#000"/><rect x="9" y="13" width="1" height="1" fill="#c0c0c0"/><rect x="8" y="16" width="3" height="3" fill="#000"/><rect x="8" y="16" width="1" height="1" fill="#c0c0c0"/><rect x="13" y="18" width="2" height="2" fill="#000"/><rect x="13" y="18" width="1" height="1" fill="#c0c0c0"/><rect x="8" y="21" width="2" height="1" fill="#000"/><rect x="18" y="13" width="2" height="1" fill="#fff"/><rect x="18" y="15" width="2" height="1" fill="#fff"/><rect x="21" y="12" width="3" height="1" fill="#000"/><rect x="21" y="14" width="3" height="2" fill="#000"/><rect x="21" y="12" width="1" height="1" fill="#c0c0c0"/><rect x="21" y="14" width="1" height="1" fill="#c0c0c0"/><rect x="21" y="18" width="3" height="1" fill="#ffff00"/><rect x="18" y="18" width="2" height="1" fill="#000"/><rect x="18" y="20" width="2" height="1" fill="#000"/><rect x="21" y="19" width="3" height="1" fill="#000"/></svg>
<svg style="left:539px;top:182px" width="22" height="22" viewBox="0 0 22 22"><defs><linearGradient id="lg193" x1="0" y1="0" x2="1" y2="1"><stop offset="0" stop-color="#30e030"/><stop offset="0.5" stop-color="#10b010"/><stop offset="1" stop-color="#005800"/></linearGradient></defs><circle cx="10.5" cy="11" r="9.8" fill="#008000" stroke="url(#lg193)" stroke-width="1.6"/><circle cx="10.5" cy="11" r="7.6" fill="#008400" stroke="url(#lg193)" stroke-width="1"/><path d="M7,8.5 L9,7 L9.5,8.5 Z" fill="#60e060"/></svg>
<svg style="left:539px;top:209px" width="22" height="22" viewBox="0 0 22 22"><defs><linearGradient id="lg220" x1="0" y1="0" x2="1" y2="1"><stop offset="0" stop-color="#f8f4d0"/><stop offset="0.5" stop-color="#e0dcc8"/><stop offset="0.62" stop-color="#7878a0"/><stop offset="1" stop-color="#505080"/></linearGradient></defs><circle cx="10.5" cy="11" r="9.8" fill="#c0c0c0" stroke="url(#lg220)" stroke-width="1.4"/><circle cx="10.5" cy="11" r="7.6" fill="#c4c4c4" stroke="url(#lg220)" stroke-width="1"/><path d="M7,8.5 L9,7 L9.5,8.5 Z" fill="#e8e8e0"/></svg>
<svg style="left:539px;top:237px" width="22" height="22" viewBox="0 0 22 22"><defs><linearGradient id="lg248" x1="0" y1="0" x2="1" y2="1"><stop offset="0" stop-color="#f8f4d0"/><stop offset="0.5" stop-color="#e0dcc8"/><stop offset="0.62" stop-color="#7878a0"/><stop offset="1" stop-color="#505080"/></linearGradient></defs><circle cx="10.5" cy="11" r="9.8" fill="#c0c0c0" stroke="url(#lg248)" stroke-width="1.4"/><circle cx="10.5" cy="11" r="7.6" fill="#c4c4c4" stroke="url(#lg248)" stroke-width="1"/><path d="M7,8.5 L9,7 L9.5,8.5 Z" fill="#e8e8e0"/></svg>
<svg style="left:539px;top:264px" width="22" height="22" viewBox="0 0 22 22"><defs><linearGradient id="lg275" x1="0" y1="0" x2="1" y2="1"><stop offset="0" stop-color="#30e030"/><stop offset="0.5" stop-color="#10b010"/><stop offset="1" stop-color="#005800"/></linearGradient></defs><circle cx="10.5" cy="11" r="9.8" fill="#008000" stroke="url(#lg275)" stroke-width="1.6"/><circle cx="10.5" cy="11" r="7.6" fill="#008400" stroke="url(#lg275)" stroke-width="1"/><path d="M7,8.5 L9,7 L9.5,8.5 Z" fill="#60e060"/></svg>
</body></html>
